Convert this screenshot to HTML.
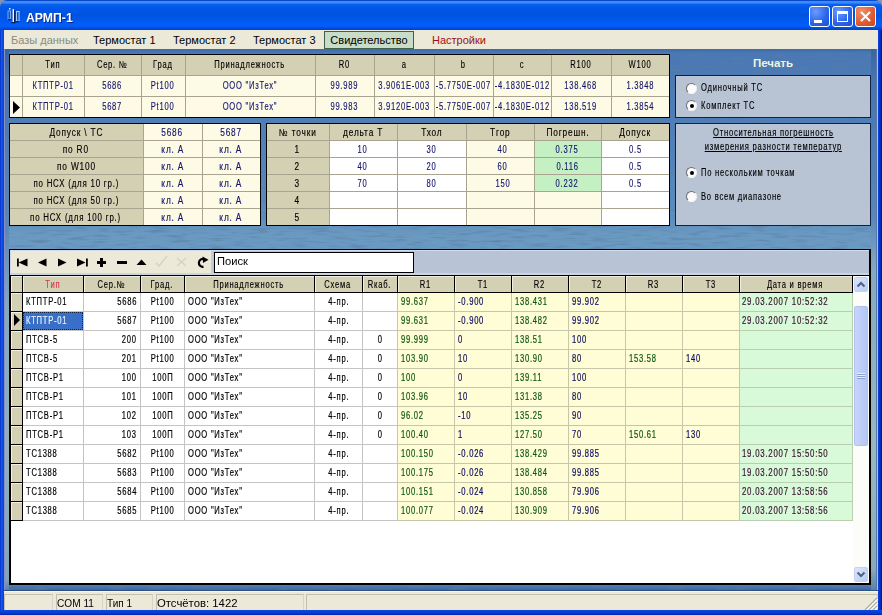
<!DOCTYPE html><html><head><meta charset="utf-8"><style>
html,body{margin:0;padding:0;width:882px;height:615px;overflow:hidden;background:#8a94a8;font-family:"Liberation Sans", sans-serif;font-size:11px;}
div{box-sizing:border-box;}
</style></head><body>
<div style="position:absolute;left:0px;top:0px;width:882px;height:30px;background:linear-gradient(#0a48c8 0,#0a48c8 1px,#3d90ff 1px,#3888f8 3px,#0a5ef0 4.5px,#0058e8 8px,#0053e0 15px,#005af2 22px,#0060fa 26px,#004ede 28px,#0040c8 30px);border-radius:7px 7px 0 0;"></div>
<div style="position:absolute;left:0px;top:30px;width:4px;height:585px;background:linear-gradient(90deg,#0a3cd0 0,#0a3cd0 1px,#1454f0 1px,#1454f0 2px,#0c4ae8 2px,#0c4ae8 3px,#0a44e0 3px);"></div>
<div style="position:absolute;left:878px;top:30px;width:4px;height:585px;background:linear-gradient(90deg,#0a40d8 0,#0a40d8 1px,#0634c8 1px,#0634c8 2px,#042cb8 2px,#042cb8 3px,#0020a0 3px);"></div>
<div style="position:absolute;left:0px;top:610px;width:882px;height:5px;background:linear-gradient(#0a48e0,#0a40d8 2px,#0634c0 4px,#0020a0);"></div>
<svg style="position:absolute;left:4px;top:4px" width="22" height="22" viewBox="0 0 22 22"><rect x="4" y="7" width="2.5" height="8" fill="none" stroke="#7aaaf0" stroke-width="1"/><rect x="4" y="15" width="3" height="1.2" fill="#102070"/><rect x="5" y="4" width="1.5" height="1.5" fill="#e8f4ff"/><rect x="8.6" y="5" width="1.4" height="13" fill="#f0f8ff"/><rect x="10" y="6.5" width="1.4" height="12" fill="#0a1a60"/><rect x="7.5" y="18" width="4" height="1.3" fill="#0a1a60"/><rect x="12.5" y="7.5" width="2.6" height="9.5" fill="none" stroke="#a8ccf8" stroke-width="1"/><rect x="12" y="17" width="3.5" height="1.2" fill="#102070"/></svg>
<div style="position:absolute;left:26px;top:8px;width:120px;height:20px;line-height:20px;display:flex;justify-content:flex-start;white-space:nowrap;color:#fff;font-size:12.5px;font-weight:bold;text-shadow:1px 1px 0 #0a2a90;"><span style="display:block;flex:none;transform:scaleX(0.98);transform-origin:0 50%;">АРМП-1</span></div>
<div style="position:absolute;left:809px;top:6px;width:21px;height:21px;border:1px solid #fff;border-radius:3px;background:radial-gradient(circle at 30% 25%,#6a9cff,#2a62e8 60%,#1a50d8);"><div style="position:absolute;left:4px;top:13px;width:8px;height:3px;background:#fff"></div></div>
<div style="position:absolute;left:832px;top:6px;width:21px;height:21px;border:1px solid #fff;border-radius:3px;background:radial-gradient(circle at 30% 25%,#6a9cff,#2a62e8 60%,#1a50d8);"><div style="position:absolute;left:4px;top:4px;width:11px;height:11px;border:1px solid #fff;border-top-width:3px"></div></div>
<div style="position:absolute;left:855px;top:6px;width:21px;height:21px;border:1px solid #fff;border-radius:3px;background:radial-gradient(circle at 30% 25%,#f09070,#e05a30 60%,#c84818);"><svg style="position:absolute;left:3px;top:3px" width="13" height="13"><path d="M2 2L11 11M11 2L2 11" stroke="#fff" stroke-width="2"/></svg></div>
<div style="position:absolute;left:4px;top:30px;width:874px;height:19px;background:#ece9d8;"></div>
<div style="position:absolute;left:11px;top:31px;width:120px;height:19px;line-height:19px;display:flex;justify-content:flex-start;white-space:nowrap;color:#8a8a80;font-size:11px;"><span style="display:block;flex:none;transform:scaleX(1.0);transform-origin:0 50%;">Базы данных</span></div>
<div style="position:absolute;left:93px;top:31px;width:120px;height:19px;line-height:19px;display:flex;justify-content:flex-start;white-space:nowrap;color:#000;font-size:11px;"><span style="display:block;flex:none;transform:scaleX(1.0);transform-origin:0 50%;">Термостат 1</span></div>
<div style="position:absolute;left:173px;top:31px;width:120px;height:19px;line-height:19px;display:flex;justify-content:flex-start;white-space:nowrap;color:#000;font-size:11px;"><span style="display:block;flex:none;transform:scaleX(1.0);transform-origin:0 50%;">Термостат 2</span></div>
<div style="position:absolute;left:253px;top:31px;width:120px;height:19px;line-height:19px;display:flex;justify-content:flex-start;white-space:nowrap;color:#000;font-size:11px;"><span style="display:block;flex:none;transform:scaleX(1.0);transform-origin:0 50%;">Термостат 3</span></div>
<div style="position:absolute;left:432px;top:31px;width:120px;height:19px;line-height:19px;display:flex;justify-content:flex-start;white-space:nowrap;color:#a01010;font-size:11px;"><span style="display:block;flex:none;transform:scaleX(1.0);transform-origin:0 50%;">Настройки</span></div>
<div style="position:absolute;left:324px;top:31px;width:90px;height:18px;background:#c8dcc8;border:1px solid #40604a;"></div>
<div style="position:absolute;left:324px;top:31px;width:90px;height:19px;line-height:19px;display:flex;justify-content:center;white-space:nowrap;color:#000;font-size:11px;"><span style="display:block;flex:none;transform:scaleX(1.0);transform-origin:50% 50%;">Свидетельство</span></div>
<div style="position:absolute;left:4px;top:49px;width:874px;height:542px;background:linear-gradient(180deg,#3e6aa8 0px,#4a78b5 4px,#4d7cb8 60px,#5686bc 130px,#5d8ebf 170px,#6a9ac2 185px,#6a9ac2 200px,#5b8cbf 240px,#4f80b8 536px,#3a609a 542px);"></div>
<svg style="position:absolute;left:9px;top:53px" width="862" height="537"><filter id="tx" x="0" y="0" width="100%" height="100%"><feTurbulence type="fractalNoise" baseFrequency="0.05 0.4" numOctaves="2" seed="3"/><feColorMatrix values="0 0 0 0 0.1  0 0 0 0 0.2  0 0 0 0 0.35  0 0 0 -1.6 0.85"/></filter><rect width="862" height="537" filter="url(#tx)"/></svg>
<div style="position:absolute;left:4px;top:49px;width:5px;height:542px;background:linear-gradient(90deg,#8890c0 0,#8890c0 1px,rgba(0,0,0,0) 1px),linear-gradient(180deg,#3a64a0 0,#4874b0 30px,#5a88b8 180px,#84a8c0 260px,#90b0bc 400px,#80a4bc 530px,#5a80a8 542px);"></div>
<div style="position:absolute;left:871px;top:49px;width:7px;height:541px;background:linear-gradient(90deg,rgba(0,0,0,0) 5px,#5878a0 5px,#5878a0 6px,#a8c4e0 6px),linear-gradient(180deg,#3a64a0 0,#4874b0 30px,#5a88b8 170px,#84a8c0 220px,#98b8c0 400px,#88a8bc 520px,#5a80a8 541px);"></div>
<div style="position:absolute;left:4px;top:590px;width:874px;height:1px;background:#30508a;"></div>
<div style="position:absolute;left:4px;top:591px;width:874px;height:19px;background:#ece9d8;border-top:1px solid #f8f6ee;"></div>
<div style="position:absolute;left:4px;top:594px;width:49px;height:16px;border-left:1px solid #c4c0b0;border-top:1px solid #c4c0b0;border-right:1px solid #d8d4c8;"></div>
<div style="position:absolute;left:5px;top:595px;width:49px;height:16px;line-height:16px;display:flex;justify-content:flex-start;white-space:nowrap;color:#000;font-size:11px;"><span style="display:block;flex:none;transform:scaleX(1);transform-origin:0 50%;"></span></div>
<div style="position:absolute;left:56px;top:594px;width:47px;height:16px;border-left:1px solid #c4c0b0;border-top:1px solid #c4c0b0;border-right:1px solid #d8d4c8;"></div>
<div style="position:absolute;left:57px;top:595px;width:47px;height:16px;line-height:16px;display:flex;justify-content:flex-start;white-space:nowrap;color:#000;font-size:11px;"><span style="display:block;flex:none;transform:scaleX(0.92);transform-origin:0 50%;">COM 11</span></div>
<div style="position:absolute;left:106px;top:594px;width:47px;height:16px;border-left:1px solid #c4c0b0;border-top:1px solid #c4c0b0;border-right:1px solid #d8d4c8;"></div>
<div style="position:absolute;left:107px;top:595px;width:47px;height:16px;line-height:16px;display:flex;justify-content:flex-start;white-space:nowrap;color:#000;font-size:11px;"><span style="display:block;flex:none;transform:scaleX(0.91);transform-origin:0 50%;">Тип 1</span></div>
<div style="position:absolute;left:156px;top:594px;width:148px;height:16px;border-left:1px solid #c4c0b0;border-top:1px solid #c4c0b0;border-right:1px solid #d8d4c8;"></div>
<div style="position:absolute;left:157px;top:595px;width:148px;height:16px;line-height:16px;display:flex;justify-content:flex-start;white-space:nowrap;color:#000;font-size:11px;"><span style="display:block;flex:none;transform:scaleX(1.03);transform-origin:0 50%;">Отсчётов: 1422</span></div>
<div style="position:absolute;left:306px;top:594px;width:572px;height:16px;border-left:1px solid #c4c0b0;border-top:1px solid #c4c0b0;border-right:1px solid #d8d4c8;"></div>
<div style="position:absolute;left:307px;top:595px;width:572px;height:16px;line-height:16px;display:flex;justify-content:flex-start;white-space:nowrap;color:#000;font-size:11px;"><span style="display:block;flex:none;transform:scaleX(1);transform-origin:0 50%;"></span></div>
<svg style="position:absolute;left:864px;top:597px" width="14" height="13"><g stroke-width="1.2"><path d="M13 1L1 13" stroke="#aca899"/><path d="M13 5L5 13" stroke="#aca899"/><path d="M13 9L9 13" stroke="#aca899"/><path d="M14 2L2 14" stroke="#fff"/><path d="M14 6L6 14" stroke="#fff"/><path d="M14 10L10 14" stroke="#fff"/></g></svg>
<div style="position:absolute;left:9px;top:54px;width:661px;height:64px;background:#a8a490;border:1px solid #000;"></div>
<div style="position:absolute;left:10px;top:55px;width:12px;height:20px;background:#d4d0b4;"></div>
<div style="position:absolute;left:23px;top:55px;width:61px;height:20px;background:#d4d0b4;"></div>
<div style="position:absolute;left:22px;top:55px;width:61px;height:20px;line-height:20px;display:flex;justify-content:center;white-space:nowrap;color:#000;font-size:10px;-webkit-text-stroke:0.15px #000;"><span style="display:block;flex:none;transform:scaleX(0.76);transform-origin:50% 50%;letter-spacing:1.0px;margin-right:-1.0px;">Тип</span></div>
<div style="position:absolute;left:85px;top:55px;width:56px;height:20px;background:#d4d0b4;"></div>
<div style="position:absolute;left:84px;top:55px;width:56px;height:20px;line-height:20px;display:flex;justify-content:center;white-space:nowrap;color:#000;font-size:10px;-webkit-text-stroke:0.15px #000;"><span style="display:block;flex:none;transform:scaleX(0.76);transform-origin:50% 50%;letter-spacing:1.0px;margin-right:-1.0px;">Сер. №</span></div>
<div style="position:absolute;left:142px;top:55px;width:43px;height:20px;background:#d4d0b4;"></div>
<div style="position:absolute;left:141px;top:55px;width:43px;height:20px;line-height:20px;display:flex;justify-content:center;white-space:nowrap;color:#000;font-size:10px;-webkit-text-stroke:0.15px #000;"><span style="display:block;flex:none;transform:scaleX(0.76);transform-origin:50% 50%;letter-spacing:1.0px;margin-right:-1.0px;">Град</span></div>
<div style="position:absolute;left:186px;top:55px;width:129px;height:20px;background:#d4d0b4;"></div>
<div style="position:absolute;left:185px;top:55px;width:129px;height:20px;line-height:20px;display:flex;justify-content:center;white-space:nowrap;color:#000;font-size:10px;-webkit-text-stroke:0.15px #000;"><span style="display:block;flex:none;transform:scaleX(0.76);transform-origin:50% 50%;letter-spacing:1.0px;margin-right:-1.0px;">Принадлежность</span></div>
<div style="position:absolute;left:316px;top:55px;width:58px;height:20px;background:#d4d0b4;"></div>
<div style="position:absolute;left:315px;top:55px;width:58px;height:20px;line-height:20px;display:flex;justify-content:center;white-space:nowrap;color:#000;font-size:10px;-webkit-text-stroke:0.15px #000;"><span style="display:block;flex:none;transform:scaleX(0.76);transform-origin:50% 50%;letter-spacing:1.0px;margin-right:-1.0px;">R0</span></div>
<div style="position:absolute;left:375px;top:55px;width:59px;height:20px;background:#d4d0b4;"></div>
<div style="position:absolute;left:374px;top:55px;width:59px;height:20px;line-height:20px;display:flex;justify-content:center;white-space:nowrap;color:#000;font-size:10px;-webkit-text-stroke:0.15px #000;"><span style="display:block;flex:none;transform:scaleX(0.76);transform-origin:50% 50%;letter-spacing:1.0px;margin-right:-1.0px;">a</span></div>
<div style="position:absolute;left:435px;top:55px;width:58px;height:20px;background:#d4d0b4;"></div>
<div style="position:absolute;left:434px;top:55px;width:58px;height:20px;line-height:20px;display:flex;justify-content:center;white-space:nowrap;color:#000;font-size:10px;-webkit-text-stroke:0.15px #000;"><span style="display:block;flex:none;transform:scaleX(0.76);transform-origin:50% 50%;letter-spacing:1.0px;margin-right:-1.0px;">b</span></div>
<div style="position:absolute;left:494px;top:55px;width:57px;height:20px;background:#d4d0b4;"></div>
<div style="position:absolute;left:493px;top:55px;width:57px;height:20px;line-height:20px;display:flex;justify-content:center;white-space:nowrap;color:#000;font-size:10px;-webkit-text-stroke:0.15px #000;"><span style="display:block;flex:none;transform:scaleX(0.76);transform-origin:50% 50%;letter-spacing:1.0px;margin-right:-1.0px;">c</span></div>
<div style="position:absolute;left:552px;top:55px;width:59px;height:20px;background:#d4d0b4;"></div>
<div style="position:absolute;left:551px;top:55px;width:59px;height:20px;line-height:20px;display:flex;justify-content:center;white-space:nowrap;color:#000;font-size:10px;-webkit-text-stroke:0.15px #000;"><span style="display:block;flex:none;transform:scaleX(0.76);transform-origin:50% 50%;letter-spacing:1.0px;margin-right:-1.0px;">R100</span></div>
<div style="position:absolute;left:612px;top:55px;width:57px;height:20px;background:#d4d0b4;"></div>
<div style="position:absolute;left:611px;top:55px;width:57px;height:20px;line-height:20px;display:flex;justify-content:center;white-space:nowrap;color:#000;font-size:10px;-webkit-text-stroke:0.15px #000;"><span style="display:block;flex:none;transform:scaleX(0.76);transform-origin:50% 50%;letter-spacing:1.0px;margin-right:-1.0px;">W100</span></div>
<div style="position:absolute;left:10px;top:76px;width:12px;height:20px;background:#fdfbe6;"></div>
<div style="position:absolute;left:23px;top:76px;width:61px;height:20px;background:#fdfbe6;"></div>
<div style="position:absolute;left:22px;top:76px;width:61px;height:20px;line-height:20px;display:flex;justify-content:center;white-space:nowrap;color:#14146e;font-size:10px;-webkit-text-stroke:0.15px #14146e;"><span style="display:block;flex:none;transform:scaleX(0.76);transform-origin:50% 50%;letter-spacing:1.0px;margin-right:-1.0px;">КТПТР-01</span></div>
<div style="position:absolute;left:85px;top:76px;width:56px;height:20px;background:#fdfbe6;"></div>
<div style="position:absolute;left:84px;top:76px;width:56px;height:20px;line-height:20px;display:flex;justify-content:center;white-space:nowrap;color:#14146e;font-size:10px;-webkit-text-stroke:0.15px #14146e;"><span style="display:block;flex:none;transform:scaleX(0.76);transform-origin:50% 50%;letter-spacing:1.0px;margin-right:-1.0px;">5686</span></div>
<div style="position:absolute;left:142px;top:76px;width:43px;height:20px;background:#fdfbe6;"></div>
<div style="position:absolute;left:141px;top:76px;width:43px;height:20px;line-height:20px;display:flex;justify-content:center;white-space:nowrap;color:#14146e;font-size:10px;-webkit-text-stroke:0.15px #14146e;"><span style="display:block;flex:none;transform:scaleX(0.76);transform-origin:50% 50%;letter-spacing:1.0px;margin-right:-1.0px;">Pt100</span></div>
<div style="position:absolute;left:186px;top:76px;width:129px;height:20px;background:#fdfbe6;"></div>
<div style="position:absolute;left:185px;top:76px;width:129px;height:20px;line-height:20px;display:flex;justify-content:center;white-space:nowrap;color:#14146e;font-size:10px;-webkit-text-stroke:0.15px #14146e;"><span style="display:block;flex:none;transform:scaleX(0.76);transform-origin:50% 50%;letter-spacing:1.0px;margin-right:-1.0px;">ООО "ИзТех"</span></div>
<div style="position:absolute;left:316px;top:76px;width:58px;height:20px;background:#fdfbe6;"></div>
<div style="position:absolute;left:315px;top:76px;width:58px;height:20px;line-height:20px;display:flex;justify-content:center;white-space:nowrap;color:#14146e;font-size:10px;-webkit-text-stroke:0.15px #14146e;"><span style="display:block;flex:none;transform:scaleX(0.76);transform-origin:50% 50%;letter-spacing:1.0px;margin-right:-1.0px;">99.989</span></div>
<div style="position:absolute;left:375px;top:76px;width:59px;height:20px;background:#fdfbe6;"></div>
<div style="position:absolute;left:374px;top:76px;width:59px;height:20px;line-height:20px;display:flex;justify-content:center;white-space:nowrap;color:#14146e;font-size:10px;-webkit-text-stroke:0.15px #14146e;"><span style="display:block;flex:none;transform:scaleX(0.76);transform-origin:50% 50%;letter-spacing:1.0px;margin-right:-1.0px;">3.9061E-003</span></div>
<div style="position:absolute;left:435px;top:76px;width:58px;height:20px;background:#fdfbe6;"></div>
<div style="position:absolute;left:434px;top:76px;width:58px;height:20px;line-height:20px;display:flex;justify-content:center;white-space:nowrap;color:#14146e;font-size:10px;-webkit-text-stroke:0.15px #14146e;"><span style="display:block;flex:none;transform:scaleX(0.76);transform-origin:50% 50%;letter-spacing:1.0px;margin-right:-1.0px;">-5.7750E-007</span></div>
<div style="position:absolute;left:494px;top:76px;width:57px;height:20px;background:#fdfbe6;"></div>
<div style="position:absolute;left:493px;top:76px;width:57px;height:20px;line-height:20px;display:flex;justify-content:center;white-space:nowrap;color:#14146e;font-size:10px;-webkit-text-stroke:0.15px #14146e;"><span style="display:block;flex:none;transform:scaleX(0.76);transform-origin:50% 50%;letter-spacing:1.0px;margin-right:-1.0px;">-4.1830E-012</span></div>
<div style="position:absolute;left:552px;top:76px;width:59px;height:20px;background:#fdfbe6;"></div>
<div style="position:absolute;left:551px;top:76px;width:59px;height:20px;line-height:20px;display:flex;justify-content:center;white-space:nowrap;color:#14146e;font-size:10px;-webkit-text-stroke:0.15px #14146e;"><span style="display:block;flex:none;transform:scaleX(0.76);transform-origin:50% 50%;letter-spacing:1.0px;margin-right:-1.0px;">138.468</span></div>
<div style="position:absolute;left:612px;top:76px;width:57px;height:20px;background:#fdfbe6;"></div>
<div style="position:absolute;left:611px;top:76px;width:57px;height:20px;line-height:20px;display:flex;justify-content:center;white-space:nowrap;color:#14146e;font-size:10px;-webkit-text-stroke:0.15px #14146e;"><span style="display:block;flex:none;transform:scaleX(0.76);transform-origin:50% 50%;letter-spacing:1.0px;margin-right:-1.0px;">1.3848</span></div>
<div style="position:absolute;left:10px;top:97px;width:12px;height:20px;background:#fdfbe6;"></div>
<div style="position:absolute;left:23px;top:97px;width:61px;height:20px;background:#fdfbe6;"></div>
<div style="position:absolute;left:22px;top:97px;width:61px;height:20px;line-height:20px;display:flex;justify-content:center;white-space:nowrap;color:#14146e;font-size:10px;-webkit-text-stroke:0.15px #14146e;"><span style="display:block;flex:none;transform:scaleX(0.76);transform-origin:50% 50%;letter-spacing:1.0px;margin-right:-1.0px;">КТПТР-01</span></div>
<div style="position:absolute;left:85px;top:97px;width:56px;height:20px;background:#fdfbe6;"></div>
<div style="position:absolute;left:84px;top:97px;width:56px;height:20px;line-height:20px;display:flex;justify-content:center;white-space:nowrap;color:#14146e;font-size:10px;-webkit-text-stroke:0.15px #14146e;"><span style="display:block;flex:none;transform:scaleX(0.76);transform-origin:50% 50%;letter-spacing:1.0px;margin-right:-1.0px;">5687</span></div>
<div style="position:absolute;left:142px;top:97px;width:43px;height:20px;background:#fdfbe6;"></div>
<div style="position:absolute;left:141px;top:97px;width:43px;height:20px;line-height:20px;display:flex;justify-content:center;white-space:nowrap;color:#14146e;font-size:10px;-webkit-text-stroke:0.15px #14146e;"><span style="display:block;flex:none;transform:scaleX(0.76);transform-origin:50% 50%;letter-spacing:1.0px;margin-right:-1.0px;">Pt100</span></div>
<div style="position:absolute;left:186px;top:97px;width:129px;height:20px;background:#fdfbe6;"></div>
<div style="position:absolute;left:185px;top:97px;width:129px;height:20px;line-height:20px;display:flex;justify-content:center;white-space:nowrap;color:#14146e;font-size:10px;-webkit-text-stroke:0.15px #14146e;"><span style="display:block;flex:none;transform:scaleX(0.76);transform-origin:50% 50%;letter-spacing:1.0px;margin-right:-1.0px;">ООО "ИзТех"</span></div>
<div style="position:absolute;left:316px;top:97px;width:58px;height:20px;background:#fdfbe6;"></div>
<div style="position:absolute;left:315px;top:97px;width:58px;height:20px;line-height:20px;display:flex;justify-content:center;white-space:nowrap;color:#14146e;font-size:10px;-webkit-text-stroke:0.15px #14146e;"><span style="display:block;flex:none;transform:scaleX(0.76);transform-origin:50% 50%;letter-spacing:1.0px;margin-right:-1.0px;">99.983</span></div>
<div style="position:absolute;left:375px;top:97px;width:59px;height:20px;background:#fdfbe6;"></div>
<div style="position:absolute;left:374px;top:97px;width:59px;height:20px;line-height:20px;display:flex;justify-content:center;white-space:nowrap;color:#14146e;font-size:10px;-webkit-text-stroke:0.15px #14146e;"><span style="display:block;flex:none;transform:scaleX(0.76);transform-origin:50% 50%;letter-spacing:1.0px;margin-right:-1.0px;">3.9120E-003</span></div>
<div style="position:absolute;left:435px;top:97px;width:58px;height:20px;background:#fdfbe6;"></div>
<div style="position:absolute;left:434px;top:97px;width:58px;height:20px;line-height:20px;display:flex;justify-content:center;white-space:nowrap;color:#14146e;font-size:10px;-webkit-text-stroke:0.15px #14146e;"><span style="display:block;flex:none;transform:scaleX(0.76);transform-origin:50% 50%;letter-spacing:1.0px;margin-right:-1.0px;">-5.7750E-007</span></div>
<div style="position:absolute;left:494px;top:97px;width:57px;height:20px;background:#fdfbe6;"></div>
<div style="position:absolute;left:493px;top:97px;width:57px;height:20px;line-height:20px;display:flex;justify-content:center;white-space:nowrap;color:#14146e;font-size:10px;-webkit-text-stroke:0.15px #14146e;"><span style="display:block;flex:none;transform:scaleX(0.76);transform-origin:50% 50%;letter-spacing:1.0px;margin-right:-1.0px;">-4.1830E-012</span></div>
<div style="position:absolute;left:552px;top:97px;width:59px;height:20px;background:#fdfbe6;"></div>
<div style="position:absolute;left:551px;top:97px;width:59px;height:20px;line-height:20px;display:flex;justify-content:center;white-space:nowrap;color:#14146e;font-size:10px;-webkit-text-stroke:0.15px #14146e;"><span style="display:block;flex:none;transform:scaleX(0.76);transform-origin:50% 50%;letter-spacing:1.0px;margin-right:-1.0px;">138.519</span></div>
<div style="position:absolute;left:612px;top:97px;width:57px;height:20px;background:#fdfbe6;"></div>
<div style="position:absolute;left:611px;top:97px;width:57px;height:20px;line-height:20px;display:flex;justify-content:center;white-space:nowrap;color:#14146e;font-size:10px;-webkit-text-stroke:0.15px #14146e;"><span style="display:block;flex:none;transform:scaleX(0.76);transform-origin:50% 50%;letter-spacing:1.0px;margin-right:-1.0px;">1.3854</span></div>
<svg style="position:absolute;left:12px;top:101px" width="9" height="13"><path d="M1 0L8 6.5L1 13Z" fill="#000"/></svg>
<div style="position:absolute;left:675px;top:53px;width:196px;height:20px;line-height:20px;display:flex;justify-content:center;white-space:nowrap;color:#eef4e0;font-size:11.5px;font-weight:bold;"><span style="display:block;flex:none;transform:scaleX(1.0);transform-origin:50% 50%;">Печать</span></div>
<div style="position:absolute;left:675px;top:75px;width:196px;height:43px;background:#b8c4d4;border:1px solid #102040;"></div>
<div style="position:absolute;left:686.0px;top:83.0px;width:11px;height:11px;border-radius:50%;background:#fcfcfc;border:1px solid;border-color:#6c6c6c #f0f0f0 #f8f8f8 #6c6c6c;transform:rotate(0deg);"></div>
<div style="position:absolute;left:701px;top:79px;width:160px;height:17px;line-height:17px;display:flex;justify-content:flex-start;white-space:nowrap;color:#000;font-size:10px;-webkit-text-stroke:0.15px #000;"><span style="display:block;flex:none;transform:scaleX(0.76);transform-origin:0 50%;letter-spacing:1.0px;">Одиночный ТС</span></div>
<div style="position:absolute;left:686.0px;top:100.0px;width:11px;height:11px;border-radius:50%;background:#fcfcfc;border:1px solid;border-color:#6c6c6c #f0f0f0 #f8f8f8 #6c6c6c;transform:rotate(0deg);"><div style="position:absolute;left:3px;top:3px;width:4px;height:4px;border-radius:50%;background:#000"></div></div>
<div style="position:absolute;left:701px;top:97px;width:160px;height:17px;line-height:17px;display:flex;justify-content:flex-start;white-space:nowrap;color:#000;font-size:10px;-webkit-text-stroke:0.15px #000;"><span style="display:block;flex:none;transform:scaleX(0.76);transform-origin:0 50%;letter-spacing:1.0px;">Комплект ТС</span></div>
<div style="position:absolute;left:9px;top:123px;width:252px;height:103px;background:#a8a490;border:1px solid #000;"></div>
<div style="position:absolute;left:10px;top:124px;width:133px;height:16px;background:#d4d0b4;"></div>
<div style="position:absolute;left:9px;top:125px;width:133px;height:16px;line-height:16px;display:flex;justify-content:center;white-space:nowrap;color:#000;font-size:10px;-webkit-text-stroke:0.15px #000;"><span style="display:block;flex:none;transform:scaleX(0.83);transform-origin:50% 50%;letter-spacing:1.0px;margin-right:-1.0px;">Допуск \ ТС</span></div>
<div style="position:absolute;left:144px;top:124px;width:58px;height:16px;background:#fdfbe6;"></div>
<div style="position:absolute;left:143px;top:125px;width:58px;height:16px;line-height:16px;display:flex;justify-content:center;white-space:nowrap;color:#14146e;font-size:10px;-webkit-text-stroke:0.15px #14146e;"><span style="display:block;flex:none;transform:scaleX(0.83);transform-origin:50% 50%;letter-spacing:1.0px;margin-right:-1.0px;">5686</span></div>
<div style="position:absolute;left:203px;top:124px;width:57px;height:16px;background:#fdfbe6;"></div>
<div style="position:absolute;left:202px;top:125px;width:57px;height:16px;line-height:16px;display:flex;justify-content:center;white-space:nowrap;color:#14146e;font-size:10px;-webkit-text-stroke:0.15px #14146e;"><span style="display:block;flex:none;transform:scaleX(0.83);transform-origin:50% 50%;letter-spacing:1.0px;margin-right:-1.0px;">5687</span></div>
<div style="position:absolute;left:10px;top:141px;width:133px;height:16px;background:#d4d0b4;"></div>
<div style="position:absolute;left:9px;top:142px;width:133px;height:16px;line-height:16px;display:flex;justify-content:center;white-space:nowrap;color:#000;font-size:10px;-webkit-text-stroke:0.15px #000;"><span style="display:block;flex:none;transform:scaleX(0.83);transform-origin:50% 50%;letter-spacing:1.0px;margin-right:-1.0px;">по R0</span></div>
<div style="position:absolute;left:144px;top:141px;width:58px;height:16px;background:#fdfbe6;"></div>
<div style="position:absolute;left:143px;top:142px;width:58px;height:16px;line-height:16px;display:flex;justify-content:center;white-space:nowrap;color:#14146e;font-size:10px;-webkit-text-stroke:0.15px #14146e;"><span style="display:block;flex:none;transform:scaleX(0.83);transform-origin:50% 50%;letter-spacing:1.0px;margin-right:-1.0px;">кл. А</span></div>
<div style="position:absolute;left:203px;top:141px;width:57px;height:16px;background:#fdfbe6;"></div>
<div style="position:absolute;left:202px;top:142px;width:57px;height:16px;line-height:16px;display:flex;justify-content:center;white-space:nowrap;color:#14146e;font-size:10px;-webkit-text-stroke:0.15px #14146e;"><span style="display:block;flex:none;transform:scaleX(0.83);transform-origin:50% 50%;letter-spacing:1.0px;margin-right:-1.0px;">кл. А</span></div>
<div style="position:absolute;left:10px;top:158px;width:133px;height:16px;background:#d4d0b4;"></div>
<div style="position:absolute;left:9px;top:159px;width:133px;height:16px;line-height:16px;display:flex;justify-content:center;white-space:nowrap;color:#000;font-size:10px;-webkit-text-stroke:0.15px #000;"><span style="display:block;flex:none;transform:scaleX(0.83);transform-origin:50% 50%;letter-spacing:1.0px;margin-right:-1.0px;">по W100</span></div>
<div style="position:absolute;left:144px;top:158px;width:58px;height:16px;background:#fdfbe6;"></div>
<div style="position:absolute;left:143px;top:159px;width:58px;height:16px;line-height:16px;display:flex;justify-content:center;white-space:nowrap;color:#14146e;font-size:10px;-webkit-text-stroke:0.15px #14146e;"><span style="display:block;flex:none;transform:scaleX(0.83);transform-origin:50% 50%;letter-spacing:1.0px;margin-right:-1.0px;">кл. А</span></div>
<div style="position:absolute;left:203px;top:158px;width:57px;height:16px;background:#fdfbe6;"></div>
<div style="position:absolute;left:202px;top:159px;width:57px;height:16px;line-height:16px;display:flex;justify-content:center;white-space:nowrap;color:#14146e;font-size:10px;-webkit-text-stroke:0.15px #14146e;"><span style="display:block;flex:none;transform:scaleX(0.83);transform-origin:50% 50%;letter-spacing:1.0px;margin-right:-1.0px;">кл. А</span></div>
<div style="position:absolute;left:10px;top:175px;width:133px;height:16px;background:#d4d0b4;"></div>
<div style="position:absolute;left:9px;top:176px;width:133px;height:16px;line-height:16px;display:flex;justify-content:center;white-space:nowrap;color:#000;font-size:10px;-webkit-text-stroke:0.15px #000;"><span style="display:block;flex:none;transform:scaleX(0.79);transform-origin:50% 50%;letter-spacing:1.0px;margin-right:-1.0px;">по НСХ (для 10 гр.)</span></div>
<div style="position:absolute;left:144px;top:175px;width:58px;height:16px;background:#fdfbe6;"></div>
<div style="position:absolute;left:143px;top:176px;width:58px;height:16px;line-height:16px;display:flex;justify-content:center;white-space:nowrap;color:#14146e;font-size:10px;-webkit-text-stroke:0.15px #14146e;"><span style="display:block;flex:none;transform:scaleX(0.83);transform-origin:50% 50%;letter-spacing:1.0px;margin-right:-1.0px;">кл. А</span></div>
<div style="position:absolute;left:203px;top:175px;width:57px;height:16px;background:#fdfbe6;"></div>
<div style="position:absolute;left:202px;top:176px;width:57px;height:16px;line-height:16px;display:flex;justify-content:center;white-space:nowrap;color:#14146e;font-size:10px;-webkit-text-stroke:0.15px #14146e;"><span style="display:block;flex:none;transform:scaleX(0.83);transform-origin:50% 50%;letter-spacing:1.0px;margin-right:-1.0px;">кл. А</span></div>
<div style="position:absolute;left:10px;top:192px;width:133px;height:16px;background:#d4d0b4;"></div>
<div style="position:absolute;left:9px;top:193px;width:133px;height:16px;line-height:16px;display:flex;justify-content:center;white-space:nowrap;color:#000;font-size:10px;-webkit-text-stroke:0.15px #000;"><span style="display:block;flex:none;transform:scaleX(0.79);transform-origin:50% 50%;letter-spacing:1.0px;margin-right:-1.0px;">по НСХ (для 50 гр.)</span></div>
<div style="position:absolute;left:144px;top:192px;width:58px;height:16px;background:#fdfbe6;"></div>
<div style="position:absolute;left:143px;top:193px;width:58px;height:16px;line-height:16px;display:flex;justify-content:center;white-space:nowrap;color:#14146e;font-size:10px;-webkit-text-stroke:0.15px #14146e;"><span style="display:block;flex:none;transform:scaleX(0.83);transform-origin:50% 50%;letter-spacing:1.0px;margin-right:-1.0px;">кл. А</span></div>
<div style="position:absolute;left:203px;top:192px;width:57px;height:16px;background:#fdfbe6;"></div>
<div style="position:absolute;left:202px;top:193px;width:57px;height:16px;line-height:16px;display:flex;justify-content:center;white-space:nowrap;color:#14146e;font-size:10px;-webkit-text-stroke:0.15px #14146e;"><span style="display:block;flex:none;transform:scaleX(0.83);transform-origin:50% 50%;letter-spacing:1.0px;margin-right:-1.0px;">кл. А</span></div>
<div style="position:absolute;left:10px;top:209px;width:133px;height:16px;background:#d4d0b4;"></div>
<div style="position:absolute;left:9px;top:210px;width:133px;height:16px;line-height:16px;display:flex;justify-content:center;white-space:nowrap;color:#000;font-size:10px;-webkit-text-stroke:0.15px #000;"><span style="display:block;flex:none;transform:scaleX(0.79);transform-origin:50% 50%;letter-spacing:1.0px;margin-right:-1.0px;">по НСХ (для 100 гр.)</span></div>
<div style="position:absolute;left:144px;top:209px;width:58px;height:16px;background:#fdfbe6;"></div>
<div style="position:absolute;left:143px;top:210px;width:58px;height:16px;line-height:16px;display:flex;justify-content:center;white-space:nowrap;color:#14146e;font-size:10px;-webkit-text-stroke:0.15px #14146e;"><span style="display:block;flex:none;transform:scaleX(0.83);transform-origin:50% 50%;letter-spacing:1.0px;margin-right:-1.0px;">кл. А</span></div>
<div style="position:absolute;left:203px;top:209px;width:57px;height:16px;background:#fdfbe6;"></div>
<div style="position:absolute;left:202px;top:210px;width:57px;height:16px;line-height:16px;display:flex;justify-content:center;white-space:nowrap;color:#14146e;font-size:10px;-webkit-text-stroke:0.15px #14146e;"><span style="display:block;flex:none;transform:scaleX(0.83);transform-origin:50% 50%;letter-spacing:1.0px;margin-right:-1.0px;">кл. А</span></div>
<div style="position:absolute;left:266px;top:123px;width:404px;height:103px;background:#a8a490;border:1px solid #000;"></div>
<div style="position:absolute;left:267px;top:124px;width:62px;height:16px;background:#d4d0b4;"></div>
<div style="position:absolute;left:266px;top:125px;width:62px;height:16px;line-height:16px;display:flex;justify-content:center;white-space:nowrap;color:#000;font-size:10px;-webkit-text-stroke:0.15px #000;"><span style="display:block;flex:none;transform:scaleX(0.83);transform-origin:50% 50%;letter-spacing:1.0px;margin-right:-1.0px;">№ точки</span></div>
<div style="position:absolute;left:330px;top:124px;width:67px;height:16px;background:#d4d0b4;"></div>
<div style="position:absolute;left:329px;top:125px;width:67px;height:16px;line-height:16px;display:flex;justify-content:center;white-space:nowrap;color:#000;font-size:10px;-webkit-text-stroke:0.15px #000;"><span style="display:block;flex:none;transform:scaleX(0.83);transform-origin:50% 50%;letter-spacing:1.0px;margin-right:-1.0px;">дельта T</span></div>
<div style="position:absolute;left:398px;top:124px;width:68px;height:16px;background:#d4d0b4;"></div>
<div style="position:absolute;left:397px;top:125px;width:68px;height:16px;line-height:16px;display:flex;justify-content:center;white-space:nowrap;color:#000;font-size:10px;-webkit-text-stroke:0.15px #000;"><span style="display:block;flex:none;transform:scaleX(0.83);transform-origin:50% 50%;letter-spacing:1.0px;margin-right:-1.0px;">Тхол</span></div>
<div style="position:absolute;left:467px;top:124px;width:67px;height:16px;background:#d4d0b4;"></div>
<div style="position:absolute;left:466px;top:125px;width:67px;height:16px;line-height:16px;display:flex;justify-content:center;white-space:nowrap;color:#000;font-size:10px;-webkit-text-stroke:0.15px #000;"><span style="display:block;flex:none;transform:scaleX(0.83);transform-origin:50% 50%;letter-spacing:1.0px;margin-right:-1.0px;">Tгор</span></div>
<div style="position:absolute;left:535px;top:124px;width:66px;height:16px;background:#d4d0b4;"></div>
<div style="position:absolute;left:534px;top:125px;width:66px;height:16px;line-height:16px;display:flex;justify-content:center;white-space:nowrap;color:#000;font-size:10px;-webkit-text-stroke:0.15px #000;"><span style="display:block;flex:none;transform:scaleX(0.83);transform-origin:50% 50%;letter-spacing:1.0px;margin-right:-1.0px;">Погрешн.</span></div>
<div style="position:absolute;left:602px;top:124px;width:67px;height:16px;background:#d4d0b4;"></div>
<div style="position:absolute;left:601px;top:125px;width:67px;height:16px;line-height:16px;display:flex;justify-content:center;white-space:nowrap;color:#000;font-size:10px;-webkit-text-stroke:0.15px #000;"><span style="display:block;flex:none;transform:scaleX(0.83);transform-origin:50% 50%;letter-spacing:1.0px;margin-right:-1.0px;">Допуск</span></div>
<div style="position:absolute;left:267px;top:141px;width:62px;height:16px;background:#d4d0b4;"></div>
<div style="position:absolute;left:266px;top:142px;width:62px;height:16px;line-height:16px;display:flex;justify-content:center;white-space:nowrap;color:#000;font-size:10px;-webkit-text-stroke:0.15px #000;"><span style="display:block;flex:none;transform:scaleX(0.83);transform-origin:50% 50%;letter-spacing:1.0px;margin-right:-1.0px;">1</span></div>
<div style="position:absolute;left:330px;top:141px;width:67px;height:16px;background:#ffffff;"></div>
<div style="position:absolute;left:329px;top:142px;width:67px;height:16px;line-height:16px;display:flex;justify-content:center;white-space:nowrap;color:#14146e;font-size:10px;-webkit-text-stroke:0.15px #14146e;"><span style="display:block;flex:none;transform:scaleX(0.76);transform-origin:50% 50%;letter-spacing:1.0px;margin-right:-1.0px;">10</span></div>
<div style="position:absolute;left:398px;top:141px;width:68px;height:16px;background:#ffffff;"></div>
<div style="position:absolute;left:397px;top:142px;width:68px;height:16px;line-height:16px;display:flex;justify-content:center;white-space:nowrap;color:#14146e;font-size:10px;-webkit-text-stroke:0.15px #14146e;"><span style="display:block;flex:none;transform:scaleX(0.76);transform-origin:50% 50%;letter-spacing:1.0px;margin-right:-1.0px;">30</span></div>
<div style="position:absolute;left:467px;top:141px;width:67px;height:16px;background:#fdfbe6;"></div>
<div style="position:absolute;left:466px;top:142px;width:67px;height:16px;line-height:16px;display:flex;justify-content:center;white-space:nowrap;color:#14146e;font-size:10px;-webkit-text-stroke:0.15px #14146e;"><span style="display:block;flex:none;transform:scaleX(0.76);transform-origin:50% 50%;letter-spacing:1.0px;margin-right:-1.0px;"><span style="position:relative;left:4px">40</span></span></div>
<div style="position:absolute;left:535px;top:141px;width:66px;height:16px;background:#c4f0c4;"></div>
<div style="position:absolute;left:534px;top:142px;width:66px;height:16px;line-height:16px;display:flex;justify-content:center;white-space:nowrap;color:#14146e;font-size:10px;-webkit-text-stroke:0.15px #14146e;"><span style="display:block;flex:none;transform:scaleX(0.76);transform-origin:50% 50%;letter-spacing:1.0px;margin-right:-1.0px;">0.375</span></div>
<div style="position:absolute;left:602px;top:141px;width:67px;height:16px;background:#ffffff;"></div>
<div style="position:absolute;left:601px;top:142px;width:67px;height:16px;line-height:16px;display:flex;justify-content:center;white-space:nowrap;color:#14146e;font-size:10px;-webkit-text-stroke:0.15px #14146e;"><span style="display:block;flex:none;transform:scaleX(0.76);transform-origin:50% 50%;letter-spacing:1.0px;margin-right:-1.0px;">0.5</span></div>
<div style="position:absolute;left:267px;top:158px;width:62px;height:16px;background:#d4d0b4;"></div>
<div style="position:absolute;left:266px;top:159px;width:62px;height:16px;line-height:16px;display:flex;justify-content:center;white-space:nowrap;color:#000;font-size:10px;-webkit-text-stroke:0.15px #000;"><span style="display:block;flex:none;transform:scaleX(0.83);transform-origin:50% 50%;letter-spacing:1.0px;margin-right:-1.0px;">2</span></div>
<div style="position:absolute;left:330px;top:158px;width:67px;height:16px;background:#ffffff;"></div>
<div style="position:absolute;left:329px;top:159px;width:67px;height:16px;line-height:16px;display:flex;justify-content:center;white-space:nowrap;color:#14146e;font-size:10px;-webkit-text-stroke:0.15px #14146e;"><span style="display:block;flex:none;transform:scaleX(0.76);transform-origin:50% 50%;letter-spacing:1.0px;margin-right:-1.0px;">40</span></div>
<div style="position:absolute;left:398px;top:158px;width:68px;height:16px;background:#ffffff;"></div>
<div style="position:absolute;left:397px;top:159px;width:68px;height:16px;line-height:16px;display:flex;justify-content:center;white-space:nowrap;color:#14146e;font-size:10px;-webkit-text-stroke:0.15px #14146e;"><span style="display:block;flex:none;transform:scaleX(0.76);transform-origin:50% 50%;letter-spacing:1.0px;margin-right:-1.0px;">20</span></div>
<div style="position:absolute;left:467px;top:158px;width:67px;height:16px;background:#fdfbe6;"></div>
<div style="position:absolute;left:466px;top:159px;width:67px;height:16px;line-height:16px;display:flex;justify-content:center;white-space:nowrap;color:#14146e;font-size:10px;-webkit-text-stroke:0.15px #14146e;"><span style="display:block;flex:none;transform:scaleX(0.76);transform-origin:50% 50%;letter-spacing:1.0px;margin-right:-1.0px;"><span style="position:relative;left:4px">60</span></span></div>
<div style="position:absolute;left:535px;top:158px;width:66px;height:16px;background:#c4f0c4;"></div>
<div style="position:absolute;left:534px;top:159px;width:66px;height:16px;line-height:16px;display:flex;justify-content:center;white-space:nowrap;color:#14146e;font-size:10px;-webkit-text-stroke:0.15px #14146e;"><span style="display:block;flex:none;transform:scaleX(0.76);transform-origin:50% 50%;letter-spacing:1.0px;margin-right:-1.0px;">0.116</span></div>
<div style="position:absolute;left:602px;top:158px;width:67px;height:16px;background:#ffffff;"></div>
<div style="position:absolute;left:601px;top:159px;width:67px;height:16px;line-height:16px;display:flex;justify-content:center;white-space:nowrap;color:#14146e;font-size:10px;-webkit-text-stroke:0.15px #14146e;"><span style="display:block;flex:none;transform:scaleX(0.76);transform-origin:50% 50%;letter-spacing:1.0px;margin-right:-1.0px;">0.5</span></div>
<div style="position:absolute;left:267px;top:175px;width:62px;height:16px;background:#d4d0b4;"></div>
<div style="position:absolute;left:266px;top:176px;width:62px;height:16px;line-height:16px;display:flex;justify-content:center;white-space:nowrap;color:#000;font-size:10px;-webkit-text-stroke:0.15px #000;"><span style="display:block;flex:none;transform:scaleX(0.83);transform-origin:50% 50%;letter-spacing:1.0px;margin-right:-1.0px;">3</span></div>
<div style="position:absolute;left:330px;top:175px;width:67px;height:16px;background:#ffffff;"></div>
<div style="position:absolute;left:329px;top:176px;width:67px;height:16px;line-height:16px;display:flex;justify-content:center;white-space:nowrap;color:#14146e;font-size:10px;-webkit-text-stroke:0.15px #14146e;"><span style="display:block;flex:none;transform:scaleX(0.76);transform-origin:50% 50%;letter-spacing:1.0px;margin-right:-1.0px;">70</span></div>
<div style="position:absolute;left:398px;top:175px;width:68px;height:16px;background:#ffffff;"></div>
<div style="position:absolute;left:397px;top:176px;width:68px;height:16px;line-height:16px;display:flex;justify-content:center;white-space:nowrap;color:#14146e;font-size:10px;-webkit-text-stroke:0.15px #14146e;"><span style="display:block;flex:none;transform:scaleX(0.76);transform-origin:50% 50%;letter-spacing:1.0px;margin-right:-1.0px;">80</span></div>
<div style="position:absolute;left:467px;top:175px;width:67px;height:16px;background:#fdfbe6;"></div>
<div style="position:absolute;left:466px;top:176px;width:67px;height:16px;line-height:16px;display:flex;justify-content:center;white-space:nowrap;color:#14146e;font-size:10px;-webkit-text-stroke:0.15px #14146e;"><span style="display:block;flex:none;transform:scaleX(0.76);transform-origin:50% 50%;letter-spacing:1.0px;margin-right:-1.0px;"><span style="position:relative;left:4px">150</span></span></div>
<div style="position:absolute;left:535px;top:175px;width:66px;height:16px;background:#c4f0c4;"></div>
<div style="position:absolute;left:534px;top:176px;width:66px;height:16px;line-height:16px;display:flex;justify-content:center;white-space:nowrap;color:#14146e;font-size:10px;-webkit-text-stroke:0.15px #14146e;"><span style="display:block;flex:none;transform:scaleX(0.76);transform-origin:50% 50%;letter-spacing:1.0px;margin-right:-1.0px;">0.232</span></div>
<div style="position:absolute;left:602px;top:175px;width:67px;height:16px;background:#ffffff;"></div>
<div style="position:absolute;left:601px;top:176px;width:67px;height:16px;line-height:16px;display:flex;justify-content:center;white-space:nowrap;color:#14146e;font-size:10px;-webkit-text-stroke:0.15px #14146e;"><span style="display:block;flex:none;transform:scaleX(0.76);transform-origin:50% 50%;letter-spacing:1.0px;margin-right:-1.0px;">0.5</span></div>
<div style="position:absolute;left:267px;top:192px;width:62px;height:16px;background:#d4d0b4;"></div>
<div style="position:absolute;left:266px;top:193px;width:62px;height:16px;line-height:16px;display:flex;justify-content:center;white-space:nowrap;color:#000;font-size:10px;-webkit-text-stroke:0.15px #000;"><span style="display:block;flex:none;transform:scaleX(0.83);transform-origin:50% 50%;letter-spacing:1.0px;margin-right:-1.0px;">4</span></div>
<div style="position:absolute;left:330px;top:192px;width:67px;height:16px;background:#ffffff;"></div>
<div style="position:absolute;left:398px;top:192px;width:68px;height:16px;background:#ffffff;"></div>
<div style="position:absolute;left:467px;top:192px;width:67px;height:16px;background:#fdfbe6;"></div>
<div style="position:absolute;left:535px;top:192px;width:66px;height:16px;background:#fdfbe6;"></div>
<div style="position:absolute;left:602px;top:192px;width:67px;height:16px;background:#ffffff;"></div>
<div style="position:absolute;left:267px;top:209px;width:62px;height:16px;background:#d4d0b4;"></div>
<div style="position:absolute;left:266px;top:210px;width:62px;height:16px;line-height:16px;display:flex;justify-content:center;white-space:nowrap;color:#000;font-size:10px;-webkit-text-stroke:0.15px #000;"><span style="display:block;flex:none;transform:scaleX(0.83);transform-origin:50% 50%;letter-spacing:1.0px;margin-right:-1.0px;">5</span></div>
<div style="position:absolute;left:330px;top:209px;width:67px;height:16px;background:#ffffff;"></div>
<div style="position:absolute;left:398px;top:209px;width:68px;height:16px;background:#ffffff;"></div>
<div style="position:absolute;left:467px;top:209px;width:67px;height:16px;background:#fdfbe6;"></div>
<div style="position:absolute;left:535px;top:209px;width:66px;height:16px;background:#fdfbe6;"></div>
<div style="position:absolute;left:602px;top:209px;width:67px;height:16px;background:#ffffff;"></div>
<div style="position:absolute;left:675px;top:123px;width:196px;height:103px;background:#b8c4d4;border:1px solid #102040;"></div>
<div style="position:absolute;left:675px;top:126px;width:196px;height:14px;line-height:14px;display:flex;justify-content:center;white-space:nowrap;color:#000;font-size:10px;-webkit-text-stroke:0.15px #000;"><span style="display:block;flex:none;transform:scaleX(0.76);transform-origin:50% 50%;letter-spacing:1.0px;margin-right:-1.0px;"><u>Относительная погрешность</u></span></div>
<div style="position:absolute;left:675px;top:140px;width:196px;height:14px;line-height:14px;display:flex;justify-content:center;white-space:nowrap;color:#000;font-size:10px;-webkit-text-stroke:0.15px #000;"><span style="display:block;flex:none;transform:scaleX(0.76);transform-origin:50% 50%;letter-spacing:1.0px;margin-right:-1.0px;"><u>измерения разности температур</u></span></div>
<div style="position:absolute;left:686.0px;top:166.5px;width:11px;height:11px;border-radius:50%;background:#fcfcfc;border:1px solid;border-color:#6c6c6c #f0f0f0 #f8f8f8 #6c6c6c;transform:rotate(0deg);"><div style="position:absolute;left:3px;top:3px;width:4px;height:4px;border-radius:50%;background:#000"></div></div>
<div style="position:absolute;left:701px;top:164px;width:160px;height:17px;line-height:17px;display:flex;justify-content:flex-start;white-space:nowrap;color:#000;font-size:10px;-webkit-text-stroke:0.15px #000;"><span style="display:block;flex:none;transform:scaleX(0.76);transform-origin:0 50%;letter-spacing:1.0px;">По нескольким точкам</span></div>
<div style="position:absolute;left:686.0px;top:190.5px;width:11px;height:11px;border-radius:50%;background:#fcfcfc;border:1px solid;border-color:#6c6c6c #f0f0f0 #f8f8f8 #6c6c6c;transform:rotate(0deg);"></div>
<div style="position:absolute;left:701px;top:188px;width:160px;height:17px;line-height:17px;display:flex;justify-content:flex-start;white-space:nowrap;color:#000;font-size:10px;-webkit-text-stroke:0.15px #000;"><span style="display:block;flex:none;transform:scaleX(0.76);transform-origin:0 50%;letter-spacing:1.0px;">Во всем диапазоне</span></div>
<div style="position:absolute;left:9px;top:249px;width:862px;height:336px;background:#fff;border-left:2px solid #000;border-right:2px solid #000;border-top:1px solid #000;border-bottom:2px solid #000;"></div>
<div style="position:absolute;left:10px;top:250px;width:859px;height:25px;background:#b8c4d6;"></div>
<div style="position:absolute;left:10px;top:250px;width:859px;height:1px;background:#d4dcea;"></div>
<div style="position:absolute;left:10px;top:251px;width:201px;height:22px;background:#ece9d8;border-left:1px solid #d0d8e4;"></div>
<div style="position:absolute;left:211px;top:251px;width:2px;height:22px;background:#c4ccd8;"></div>
<div style="position:absolute;left:10px;top:273px;width:859px;height:2px;background:#ccd4e0;"></div>
<svg style="position:absolute;left:11px;top:250px" width="202" height="24" viewBox="0 0 202 24"><g fill="#000"><rect x="6" y="8.5" width="1.8" height="8"/><path d="M7.5 12.5L16.5 8.5V16.5Z"/><path d="M27 12.5L35.5 8.5V16.5Z"/><path d="M47 8.5L55.5 12.5L47 16.5Z"/><path d="M66 8.5L74.5 12.5L66 16.5Z"/><rect x="75" y="8.5" width="1.8" height="8"/><rect x="86" y="11" width="9" height="3"/><rect x="89" y="8" width="3" height="9"/><rect x="106" y="11" width="10" height="3"/><path d="M125.5 15L130.5 9.5L135.5 15Z"/></g><path d="M145 13L148 16L156 6" stroke="#d4d0c4" stroke-width="1.3" fill="none"/><path d="M166 8L175 16M175 8L166 16" stroke="#d4d0c4" stroke-width="1.1" fill="none"/><path d="M192.5 16.8A4 4 0 1 1 193.5 9.2" stroke="#000" stroke-width="2.2" fill="none"/><path d="M191.5 6.5L197.5 9.8L192 13Z" fill="#000"/></svg>
<div style="position:absolute;left:214px;top:252px;width:200px;height:21px;background:#fff;border:1px solid #000;border-bottom-width:1px;"></div>
<div style="position:absolute;left:217px;top:252px;width:120px;height:19px;line-height:19px;display:flex;justify-content:flex-start;white-space:nowrap;color:#000;font-size:11.5px;"><span style="display:block;flex:none;transform:scaleX(0.97);transform-origin:0 50%;">Поиск</span></div>
<div style="position:absolute;left:11px;top:275px;width:858px;height:1px;background:#000;"></div>
<div style="position:absolute;left:11px;top:292px;width:842px;height:1px;background:#000;"></div>
<div style="position:absolute;left:11px;top:276px;width:11px;height:16px;background:#d4d0b4;border-left:1px solid #f4f2e8;border-top:1px solid #f4f2e8;"></div>
<div style="position:absolute;left:22px;top:276px;width:1px;height:16px;background:#000;"></div>
<div style="position:absolute;left:23px;top:276px;width:60px;height:16px;background:#d4d0b4;border-left:1px solid #f0eee0;border-top:1px solid #f0eee0;"></div>
<div style="position:absolute;left:22px;top:277px;width:60px;height:16px;line-height:16px;display:flex;justify-content:center;white-space:nowrap;color:#d83848;font-size:10px;-webkit-text-stroke:0.15px #d83848;"><span style="display:block;flex:none;transform:scaleX(0.76);transform-origin:50% 50%;letter-spacing:1.0px;margin-right:-1.0px;">Тип</span></div>
<div style="position:absolute;left:83px;top:276px;width:1px;height:16px;background:#000;"></div>
<div style="position:absolute;left:84px;top:276px;width:56px;height:16px;background:#d4d0b4;border-left:1px solid #f0eee0;border-top:1px solid #f0eee0;"></div>
<div style="position:absolute;left:83px;top:277px;width:56px;height:16px;line-height:16px;display:flex;justify-content:center;white-space:nowrap;color:#000;font-size:10px;-webkit-text-stroke:0.15px #000;"><span style="display:block;flex:none;transform:scaleX(0.76);transform-origin:50% 50%;letter-spacing:1.0px;margin-right:-1.0px;">Сер.№</span></div>
<div style="position:absolute;left:140px;top:276px;width:1px;height:16px;background:#000;"></div>
<div style="position:absolute;left:141px;top:276px;width:43px;height:16px;background:#d4d0b4;border-left:1px solid #f0eee0;border-top:1px solid #f0eee0;"></div>
<div style="position:absolute;left:140px;top:277px;width:43px;height:16px;line-height:16px;display:flex;justify-content:center;white-space:nowrap;color:#000;font-size:10px;-webkit-text-stroke:0.15px #000;"><span style="display:block;flex:none;transform:scaleX(0.76);transform-origin:50% 50%;letter-spacing:1.0px;margin-right:-1.0px;">Град.</span></div>
<div style="position:absolute;left:184px;top:276px;width:1px;height:16px;background:#000;"></div>
<div style="position:absolute;left:185px;top:276px;width:129px;height:16px;background:#d4d0b4;border-left:1px solid #f0eee0;border-top:1px solid #f0eee0;"></div>
<div style="position:absolute;left:184px;top:277px;width:129px;height:16px;line-height:16px;display:flex;justify-content:center;white-space:nowrap;color:#000;font-size:10px;-webkit-text-stroke:0.15px #000;"><span style="display:block;flex:none;transform:scaleX(0.76);transform-origin:50% 50%;letter-spacing:1.0px;margin-right:-1.0px;">Принадлежность</span></div>
<div style="position:absolute;left:314px;top:276px;width:1px;height:16px;background:#000;"></div>
<div style="position:absolute;left:315px;top:276px;width:47px;height:16px;background:#d4d0b4;border-left:1px solid #f0eee0;border-top:1px solid #f0eee0;"></div>
<div style="position:absolute;left:314px;top:277px;width:47px;height:16px;line-height:16px;display:flex;justify-content:center;white-space:nowrap;color:#000;font-size:10px;-webkit-text-stroke:0.15px #000;"><span style="display:block;flex:none;transform:scaleX(0.76);transform-origin:50% 50%;letter-spacing:1.0px;margin-right:-1.0px;">Схема</span></div>
<div style="position:absolute;left:362px;top:276px;width:1px;height:16px;background:#000;"></div>
<div style="position:absolute;left:363px;top:276px;width:34px;height:16px;background:#d4d0b4;border-left:1px solid #f0eee0;border-top:1px solid #f0eee0;"></div>
<div style="position:absolute;left:362px;top:277px;width:34px;height:16px;line-height:16px;display:flex;justify-content:center;white-space:nowrap;color:#000;font-size:10px;-webkit-text-stroke:0.15px #000;"><span style="display:block;flex:none;transform:scaleX(0.76);transform-origin:50% 50%;letter-spacing:1.0px;margin-right:-1.0px;">Rкаб.</span></div>
<div style="position:absolute;left:397px;top:276px;width:1px;height:16px;background:#000;"></div>
<div style="position:absolute;left:398px;top:276px;width:56px;height:16px;background:#d4d0b4;border-left:1px solid #f0eee0;border-top:1px solid #f0eee0;"></div>
<div style="position:absolute;left:397px;top:277px;width:56px;height:16px;line-height:16px;display:flex;justify-content:center;white-space:nowrap;color:#000;font-size:10px;-webkit-text-stroke:0.15px #000;"><span style="display:block;flex:none;transform:scaleX(0.76);transform-origin:50% 50%;letter-spacing:1.0px;margin-right:-1.0px;">R1</span></div>
<div style="position:absolute;left:454px;top:276px;width:1px;height:16px;background:#000;"></div>
<div style="position:absolute;left:455px;top:276px;width:56px;height:16px;background:#d4d0b4;border-left:1px solid #f0eee0;border-top:1px solid #f0eee0;"></div>
<div style="position:absolute;left:454px;top:277px;width:56px;height:16px;line-height:16px;display:flex;justify-content:center;white-space:nowrap;color:#000;font-size:10px;-webkit-text-stroke:0.15px #000;"><span style="display:block;flex:none;transform:scaleX(0.76);transform-origin:50% 50%;letter-spacing:1.0px;margin-right:-1.0px;">T1</span></div>
<div style="position:absolute;left:511px;top:276px;width:1px;height:16px;background:#000;"></div>
<div style="position:absolute;left:512px;top:276px;width:56px;height:16px;background:#d4d0b4;border-left:1px solid #f0eee0;border-top:1px solid #f0eee0;"></div>
<div style="position:absolute;left:511px;top:277px;width:56px;height:16px;line-height:16px;display:flex;justify-content:center;white-space:nowrap;color:#000;font-size:10px;-webkit-text-stroke:0.15px #000;"><span style="display:block;flex:none;transform:scaleX(0.76);transform-origin:50% 50%;letter-spacing:1.0px;margin-right:-1.0px;">R2</span></div>
<div style="position:absolute;left:568px;top:276px;width:1px;height:16px;background:#000;"></div>
<div style="position:absolute;left:569px;top:276px;width:56px;height:16px;background:#d4d0b4;border-left:1px solid #f0eee0;border-top:1px solid #f0eee0;"></div>
<div style="position:absolute;left:568px;top:277px;width:56px;height:16px;line-height:16px;display:flex;justify-content:center;white-space:nowrap;color:#000;font-size:10px;-webkit-text-stroke:0.15px #000;"><span style="display:block;flex:none;transform:scaleX(0.76);transform-origin:50% 50%;letter-spacing:1.0px;margin-right:-1.0px;">T2</span></div>
<div style="position:absolute;left:625px;top:276px;width:1px;height:16px;background:#000;"></div>
<div style="position:absolute;left:626px;top:276px;width:56px;height:16px;background:#d4d0b4;border-left:1px solid #f0eee0;border-top:1px solid #f0eee0;"></div>
<div style="position:absolute;left:625px;top:277px;width:56px;height:16px;line-height:16px;display:flex;justify-content:center;white-space:nowrap;color:#000;font-size:10px;-webkit-text-stroke:0.15px #000;"><span style="display:block;flex:none;transform:scaleX(0.76);transform-origin:50% 50%;letter-spacing:1.0px;margin-right:-1.0px;">R3</span></div>
<div style="position:absolute;left:682px;top:276px;width:1px;height:16px;background:#000;"></div>
<div style="position:absolute;left:683px;top:276px;width:56px;height:16px;background:#d4d0b4;border-left:1px solid #f0eee0;border-top:1px solid #f0eee0;"></div>
<div style="position:absolute;left:682px;top:277px;width:56px;height:16px;line-height:16px;display:flex;justify-content:center;white-space:nowrap;color:#000;font-size:10px;-webkit-text-stroke:0.15px #000;"><span style="display:block;flex:none;transform:scaleX(0.76);transform-origin:50% 50%;letter-spacing:1.0px;margin-right:-1.0px;">T3</span></div>
<div style="position:absolute;left:739px;top:276px;width:1px;height:16px;background:#000;"></div>
<div style="position:absolute;left:740px;top:276px;width:112px;height:16px;background:#d4d0b4;border-left:1px solid #f0eee0;border-top:1px solid #f0eee0;"></div>
<div style="position:absolute;left:739px;top:277px;width:112px;height:16px;line-height:16px;display:flex;justify-content:center;white-space:nowrap;color:#000;font-size:10px;-webkit-text-stroke:0.15px #000;"><span style="display:block;flex:none;transform:scaleX(0.76);transform-origin:50% 50%;letter-spacing:1.0px;margin-right:-1.0px;">Дата и время</span></div>
<div style="position:absolute;left:852px;top:276px;width:1px;height:16px;background:#000;"></div>
<div style="position:absolute;left:11px;top:293px;width:11px;height:18px;background:#d4d0b4;border-left:1px solid #f4f2e8;border-top:1px solid #f4f2e8;"></div>
<div style="position:absolute;left:11px;top:311px;width:11px;height:1px;background:#000;"></div>
<div style="position:absolute;left:22px;top:293px;width:1px;height:19px;background:#000;"></div>
<div style="position:absolute;left:23px;top:293px;width:60px;height:18px;background:#fff;"></div>
<div style="position:absolute;left:23px;top:311px;width:61px;height:1px;background:#c4c4c4;"></div>
<div style="position:absolute;left:83px;top:293px;width:1px;height:19px;background:#c4c4c4;"></div>
<div style="position:absolute;left:26px;top:293px;width:58px;height:18px;line-height:18px;display:flex;justify-content:flex-start;white-space:nowrap;color:#000;font-size:10px;-webkit-text-stroke:0.2px #000;"><span style="display:block;flex:none;transform:scaleX(0.76);transform-origin:0 50%;letter-spacing:1.0px;">КТПТР-01</span></div>
<div style="position:absolute;left:84px;top:293px;width:56px;height:18px;background:#fff;"></div>
<div style="position:absolute;left:84px;top:311px;width:57px;height:1px;background:#c4c4c4;"></div>
<div style="position:absolute;left:140px;top:293px;width:1px;height:19px;background:#c4c4c4;"></div>
<div style="position:absolute;left:84px;top:293px;width:52px;height:18px;line-height:18px;display:flex;justify-content:flex-end;white-space:nowrap;color:#000;font-size:10px;-webkit-text-stroke:0.2px #000;"><span style="display:block;flex:none;transform:scaleX(0.76);transform-origin:100% 50%;letter-spacing:1.0px;margin-right:-1.0px;">5686</span></div>
<div style="position:absolute;left:141px;top:293px;width:43px;height:18px;background:#fff;"></div>
<div style="position:absolute;left:141px;top:311px;width:44px;height:1px;background:#c4c4c4;"></div>
<div style="position:absolute;left:184px;top:293px;width:1px;height:19px;background:#c4c4c4;"></div>
<div style="position:absolute;left:141px;top:293px;width:43px;height:18px;line-height:18px;display:flex;justify-content:center;white-space:nowrap;color:#000;font-size:10px;-webkit-text-stroke:0.2px #000;"><span style="display:block;flex:none;transform:scaleX(0.76);transform-origin:50% 50%;letter-spacing:1.0px;margin-right:-1.0px;">Pt100</span></div>
<div style="position:absolute;left:185px;top:293px;width:129px;height:18px;background:#fff;"></div>
<div style="position:absolute;left:185px;top:311px;width:130px;height:1px;background:#c4c4c4;"></div>
<div style="position:absolute;left:314px;top:293px;width:1px;height:19px;background:#c4c4c4;"></div>
<div style="position:absolute;left:188px;top:293px;width:127px;height:18px;line-height:18px;display:flex;justify-content:flex-start;white-space:nowrap;color:#000;font-size:10px;-webkit-text-stroke:0.2px #000;"><span style="display:block;flex:none;transform:scaleX(0.76);transform-origin:0 50%;letter-spacing:1.0px;">ООО "ИзТех"</span></div>
<div style="position:absolute;left:315px;top:293px;width:47px;height:18px;background:#fff;"></div>
<div style="position:absolute;left:315px;top:311px;width:48px;height:1px;background:#c4c4c4;"></div>
<div style="position:absolute;left:362px;top:293px;width:1px;height:19px;background:#c4c4c4;"></div>
<div style="position:absolute;left:315px;top:293px;width:47px;height:18px;line-height:18px;display:flex;justify-content:center;white-space:nowrap;color:#000;font-size:10px;-webkit-text-stroke:0.2px #000;"><span style="display:block;flex:none;transform:scaleX(0.76);transform-origin:50% 50%;letter-spacing:1.0px;margin-right:-1.0px;">4-пр.</span></div>
<div style="position:absolute;left:363px;top:293px;width:34px;height:18px;background:#fff;"></div>
<div style="position:absolute;left:363px;top:311px;width:35px;height:1px;background:#c4c4c4;"></div>
<div style="position:absolute;left:397px;top:293px;width:1px;height:19px;background:#c4c4c4;"></div>
<div style="position:absolute;left:398px;top:293px;width:56px;height:18px;background:#fefdd6;"></div>
<div style="position:absolute;left:398px;top:311px;width:57px;height:1px;background:#c8c6a8;"></div>
<div style="position:absolute;left:454px;top:293px;width:1px;height:19px;background:#c8c6a8;"></div>
<div style="position:absolute;left:401px;top:293px;width:54px;height:18px;line-height:18px;display:flex;justify-content:flex-start;white-space:nowrap;color:#0e560e;font-size:10px;-webkit-text-stroke:0.2px #0e560e;"><span style="display:block;flex:none;transform:scaleX(0.76);transform-origin:0 50%;letter-spacing:1.0px;">99.637</span></div>
<div style="position:absolute;left:455px;top:293px;width:56px;height:18px;background:#fefdd6;"></div>
<div style="position:absolute;left:455px;top:311px;width:57px;height:1px;background:#c8c6a8;"></div>
<div style="position:absolute;left:511px;top:293px;width:1px;height:19px;background:#c8c6a8;"></div>
<div style="position:absolute;left:458px;top:293px;width:54px;height:18px;line-height:18px;display:flex;justify-content:flex-start;white-space:nowrap;color:#0c0c62;font-size:10px;-webkit-text-stroke:0.2px #0c0c62;"><span style="display:block;flex:none;transform:scaleX(0.76);transform-origin:0 50%;letter-spacing:1.0px;">-0.900</span></div>
<div style="position:absolute;left:512px;top:293px;width:56px;height:18px;background:#fefdd6;"></div>
<div style="position:absolute;left:512px;top:311px;width:57px;height:1px;background:#c8c6a8;"></div>
<div style="position:absolute;left:568px;top:293px;width:1px;height:19px;background:#c8c6a8;"></div>
<div style="position:absolute;left:515px;top:293px;width:54px;height:18px;line-height:18px;display:flex;justify-content:flex-start;white-space:nowrap;color:#0e560e;font-size:10px;-webkit-text-stroke:0.2px #0e560e;"><span style="display:block;flex:none;transform:scaleX(0.76);transform-origin:0 50%;letter-spacing:1.0px;">138.431</span></div>
<div style="position:absolute;left:569px;top:293px;width:56px;height:18px;background:#fefdd6;"></div>
<div style="position:absolute;left:569px;top:311px;width:57px;height:1px;background:#c8c6a8;"></div>
<div style="position:absolute;left:625px;top:293px;width:1px;height:19px;background:#c8c6a8;"></div>
<div style="position:absolute;left:572px;top:293px;width:54px;height:18px;line-height:18px;display:flex;justify-content:flex-start;white-space:nowrap;color:#0c0c62;font-size:10px;-webkit-text-stroke:0.2px #0c0c62;"><span style="display:block;flex:none;transform:scaleX(0.76);transform-origin:0 50%;letter-spacing:1.0px;">99.902</span></div>
<div style="position:absolute;left:626px;top:293px;width:56px;height:18px;background:#fefdd6;"></div>
<div style="position:absolute;left:626px;top:311px;width:57px;height:1px;background:#c8c6a8;"></div>
<div style="position:absolute;left:682px;top:293px;width:1px;height:19px;background:#c8c6a8;"></div>
<div style="position:absolute;left:683px;top:293px;width:56px;height:18px;background:#fefdd6;"></div>
<div style="position:absolute;left:683px;top:311px;width:57px;height:1px;background:#c8c6a8;"></div>
<div style="position:absolute;left:739px;top:293px;width:1px;height:19px;background:#c8c6a8;"></div>
<div style="position:absolute;left:740px;top:293px;width:112px;height:18px;background:#d8fad8;"></div>
<div style="position:absolute;left:740px;top:311px;width:113px;height:1px;background:#b8d0b0;"></div>
<div style="position:absolute;left:852px;top:293px;width:1px;height:19px;background:#b8d0b0;"></div>
<div style="position:absolute;left:742px;top:293px;width:110px;height:18px;line-height:18px;display:flex;justify-content:flex-start;white-space:nowrap;color:#3a1232;font-size:10px;-webkit-text-stroke:0.2px #3a1232;"><span style="display:block;flex:none;transform:scaleX(0.78);transform-origin:0 50%;letter-spacing:1.0px;">29.03.2007 10:52:32</span></div>
<div style="position:absolute;left:11px;top:312px;width:11px;height:18px;background:#d4d0b4;border-left:1px solid #f4f2e8;border-top:1px solid #f4f2e8;"></div>
<div style="position:absolute;left:11px;top:330px;width:11px;height:1px;background:#000;"></div>
<div style="position:absolute;left:22px;top:312px;width:1px;height:19px;background:#000;"></div>
<div style="position:absolute;left:23px;top:312px;width:60px;height:18px;background:#fff;"></div>
<div style="position:absolute;left:23px;top:330px;width:61px;height:1px;background:#c4c4c4;"></div>
<div style="position:absolute;left:83px;top:312px;width:1px;height:19px;background:#c4c4c4;"></div>
<div style="position:absolute;left:23px;top:312px;width:60px;height:18px;background:#3a6fc8;border:1px dotted #102040;"></div>
<div style="position:absolute;left:26px;top:312px;width:58px;height:18px;line-height:18px;display:flex;justify-content:flex-start;white-space:nowrap;color:#e8f4ff;font-size:10px;-webkit-text-stroke:0.2px #e8f4ff;"><span style="display:block;flex:none;transform:scaleX(0.76);transform-origin:0 50%;letter-spacing:1.0px;">КТПТР-01</span></div>
<div style="position:absolute;left:84px;top:312px;width:56px;height:18px;background:#fff;"></div>
<div style="position:absolute;left:84px;top:330px;width:57px;height:1px;background:#c4c4c4;"></div>
<div style="position:absolute;left:140px;top:312px;width:1px;height:19px;background:#c4c4c4;"></div>
<div style="position:absolute;left:84px;top:312px;width:52px;height:18px;line-height:18px;display:flex;justify-content:flex-end;white-space:nowrap;color:#000;font-size:10px;-webkit-text-stroke:0.2px #000;"><span style="display:block;flex:none;transform:scaleX(0.76);transform-origin:100% 50%;letter-spacing:1.0px;margin-right:-1.0px;">5687</span></div>
<div style="position:absolute;left:141px;top:312px;width:43px;height:18px;background:#fff;"></div>
<div style="position:absolute;left:141px;top:330px;width:44px;height:1px;background:#c4c4c4;"></div>
<div style="position:absolute;left:184px;top:312px;width:1px;height:19px;background:#c4c4c4;"></div>
<div style="position:absolute;left:141px;top:312px;width:43px;height:18px;line-height:18px;display:flex;justify-content:center;white-space:nowrap;color:#000;font-size:10px;-webkit-text-stroke:0.2px #000;"><span style="display:block;flex:none;transform:scaleX(0.76);transform-origin:50% 50%;letter-spacing:1.0px;margin-right:-1.0px;">Pt100</span></div>
<div style="position:absolute;left:185px;top:312px;width:129px;height:18px;background:#fff;"></div>
<div style="position:absolute;left:185px;top:330px;width:130px;height:1px;background:#c4c4c4;"></div>
<div style="position:absolute;left:314px;top:312px;width:1px;height:19px;background:#c4c4c4;"></div>
<div style="position:absolute;left:188px;top:312px;width:127px;height:18px;line-height:18px;display:flex;justify-content:flex-start;white-space:nowrap;color:#000;font-size:10px;-webkit-text-stroke:0.2px #000;"><span style="display:block;flex:none;transform:scaleX(0.76);transform-origin:0 50%;letter-spacing:1.0px;">ООО "ИзТех"</span></div>
<div style="position:absolute;left:315px;top:312px;width:47px;height:18px;background:#fff;"></div>
<div style="position:absolute;left:315px;top:330px;width:48px;height:1px;background:#c4c4c4;"></div>
<div style="position:absolute;left:362px;top:312px;width:1px;height:19px;background:#c4c4c4;"></div>
<div style="position:absolute;left:315px;top:312px;width:47px;height:18px;line-height:18px;display:flex;justify-content:center;white-space:nowrap;color:#000;font-size:10px;-webkit-text-stroke:0.2px #000;"><span style="display:block;flex:none;transform:scaleX(0.76);transform-origin:50% 50%;letter-spacing:1.0px;margin-right:-1.0px;">4-пр.</span></div>
<div style="position:absolute;left:363px;top:312px;width:34px;height:18px;background:#fff;"></div>
<div style="position:absolute;left:363px;top:330px;width:35px;height:1px;background:#c4c4c4;"></div>
<div style="position:absolute;left:397px;top:312px;width:1px;height:19px;background:#c4c4c4;"></div>
<div style="position:absolute;left:398px;top:312px;width:56px;height:18px;background:#fefdd6;"></div>
<div style="position:absolute;left:398px;top:330px;width:57px;height:1px;background:#c8c6a8;"></div>
<div style="position:absolute;left:454px;top:312px;width:1px;height:19px;background:#c8c6a8;"></div>
<div style="position:absolute;left:401px;top:312px;width:54px;height:18px;line-height:18px;display:flex;justify-content:flex-start;white-space:nowrap;color:#0e560e;font-size:10px;-webkit-text-stroke:0.2px #0e560e;"><span style="display:block;flex:none;transform:scaleX(0.76);transform-origin:0 50%;letter-spacing:1.0px;">99.631</span></div>
<div style="position:absolute;left:455px;top:312px;width:56px;height:18px;background:#fefdd6;"></div>
<div style="position:absolute;left:455px;top:330px;width:57px;height:1px;background:#c8c6a8;"></div>
<div style="position:absolute;left:511px;top:312px;width:1px;height:19px;background:#c8c6a8;"></div>
<div style="position:absolute;left:458px;top:312px;width:54px;height:18px;line-height:18px;display:flex;justify-content:flex-start;white-space:nowrap;color:#0c0c62;font-size:10px;-webkit-text-stroke:0.2px #0c0c62;"><span style="display:block;flex:none;transform:scaleX(0.76);transform-origin:0 50%;letter-spacing:1.0px;">-0.900</span></div>
<div style="position:absolute;left:512px;top:312px;width:56px;height:18px;background:#fefdd6;"></div>
<div style="position:absolute;left:512px;top:330px;width:57px;height:1px;background:#c8c6a8;"></div>
<div style="position:absolute;left:568px;top:312px;width:1px;height:19px;background:#c8c6a8;"></div>
<div style="position:absolute;left:515px;top:312px;width:54px;height:18px;line-height:18px;display:flex;justify-content:flex-start;white-space:nowrap;color:#0e560e;font-size:10px;-webkit-text-stroke:0.2px #0e560e;"><span style="display:block;flex:none;transform:scaleX(0.76);transform-origin:0 50%;letter-spacing:1.0px;">138.482</span></div>
<div style="position:absolute;left:569px;top:312px;width:56px;height:18px;background:#fefdd6;"></div>
<div style="position:absolute;left:569px;top:330px;width:57px;height:1px;background:#c8c6a8;"></div>
<div style="position:absolute;left:625px;top:312px;width:1px;height:19px;background:#c8c6a8;"></div>
<div style="position:absolute;left:572px;top:312px;width:54px;height:18px;line-height:18px;display:flex;justify-content:flex-start;white-space:nowrap;color:#0c0c62;font-size:10px;-webkit-text-stroke:0.2px #0c0c62;"><span style="display:block;flex:none;transform:scaleX(0.76);transform-origin:0 50%;letter-spacing:1.0px;">99.902</span></div>
<div style="position:absolute;left:626px;top:312px;width:56px;height:18px;background:#fefdd6;"></div>
<div style="position:absolute;left:626px;top:330px;width:57px;height:1px;background:#c8c6a8;"></div>
<div style="position:absolute;left:682px;top:312px;width:1px;height:19px;background:#c8c6a8;"></div>
<div style="position:absolute;left:683px;top:312px;width:56px;height:18px;background:#fefdd6;"></div>
<div style="position:absolute;left:683px;top:330px;width:57px;height:1px;background:#c8c6a8;"></div>
<div style="position:absolute;left:739px;top:312px;width:1px;height:19px;background:#c8c6a8;"></div>
<div style="position:absolute;left:740px;top:312px;width:112px;height:18px;background:#d8fad8;"></div>
<div style="position:absolute;left:740px;top:330px;width:113px;height:1px;background:#b8d0b0;"></div>
<div style="position:absolute;left:852px;top:312px;width:1px;height:19px;background:#b8d0b0;"></div>
<div style="position:absolute;left:742px;top:312px;width:110px;height:18px;line-height:18px;display:flex;justify-content:flex-start;white-space:nowrap;color:#3a1232;font-size:10px;-webkit-text-stroke:0.2px #3a1232;"><span style="display:block;flex:none;transform:scaleX(0.78);transform-origin:0 50%;letter-spacing:1.0px;">29.03.2007 10:52:32</span></div>
<div style="position:absolute;left:11px;top:331px;width:11px;height:18px;background:#d4d0b4;border-left:1px solid #f4f2e8;border-top:1px solid #f4f2e8;"></div>
<div style="position:absolute;left:11px;top:349px;width:11px;height:1px;background:#000;"></div>
<div style="position:absolute;left:22px;top:331px;width:1px;height:19px;background:#000;"></div>
<div style="position:absolute;left:23px;top:331px;width:60px;height:18px;background:#fff;"></div>
<div style="position:absolute;left:23px;top:349px;width:61px;height:1px;background:#c4c4c4;"></div>
<div style="position:absolute;left:83px;top:331px;width:1px;height:19px;background:#c4c4c4;"></div>
<div style="position:absolute;left:26px;top:331px;width:58px;height:18px;line-height:18px;display:flex;justify-content:flex-start;white-space:nowrap;color:#000;font-size:10px;-webkit-text-stroke:0.2px #000;"><span style="display:block;flex:none;transform:scaleX(0.76);transform-origin:0 50%;letter-spacing:1.0px;">ПТСВ-5</span></div>
<div style="position:absolute;left:84px;top:331px;width:56px;height:18px;background:#fff;"></div>
<div style="position:absolute;left:84px;top:349px;width:57px;height:1px;background:#c4c4c4;"></div>
<div style="position:absolute;left:140px;top:331px;width:1px;height:19px;background:#c4c4c4;"></div>
<div style="position:absolute;left:84px;top:331px;width:52px;height:18px;line-height:18px;display:flex;justify-content:flex-end;white-space:nowrap;color:#000;font-size:10px;-webkit-text-stroke:0.2px #000;"><span style="display:block;flex:none;transform:scaleX(0.76);transform-origin:100% 50%;letter-spacing:1.0px;margin-right:-1.0px;">200</span></div>
<div style="position:absolute;left:141px;top:331px;width:43px;height:18px;background:#fff;"></div>
<div style="position:absolute;left:141px;top:349px;width:44px;height:1px;background:#c4c4c4;"></div>
<div style="position:absolute;left:184px;top:331px;width:1px;height:19px;background:#c4c4c4;"></div>
<div style="position:absolute;left:141px;top:331px;width:43px;height:18px;line-height:18px;display:flex;justify-content:center;white-space:nowrap;color:#000;font-size:10px;-webkit-text-stroke:0.2px #000;"><span style="display:block;flex:none;transform:scaleX(0.76);transform-origin:50% 50%;letter-spacing:1.0px;margin-right:-1.0px;">Pt100</span></div>
<div style="position:absolute;left:185px;top:331px;width:129px;height:18px;background:#fff;"></div>
<div style="position:absolute;left:185px;top:349px;width:130px;height:1px;background:#c4c4c4;"></div>
<div style="position:absolute;left:314px;top:331px;width:1px;height:19px;background:#c4c4c4;"></div>
<div style="position:absolute;left:188px;top:331px;width:127px;height:18px;line-height:18px;display:flex;justify-content:flex-start;white-space:nowrap;color:#000;font-size:10px;-webkit-text-stroke:0.2px #000;"><span style="display:block;flex:none;transform:scaleX(0.76);transform-origin:0 50%;letter-spacing:1.0px;">ООО "ИзТех"</span></div>
<div style="position:absolute;left:315px;top:331px;width:47px;height:18px;background:#fff;"></div>
<div style="position:absolute;left:315px;top:349px;width:48px;height:1px;background:#c4c4c4;"></div>
<div style="position:absolute;left:362px;top:331px;width:1px;height:19px;background:#c4c4c4;"></div>
<div style="position:absolute;left:315px;top:331px;width:47px;height:18px;line-height:18px;display:flex;justify-content:center;white-space:nowrap;color:#000;font-size:10px;-webkit-text-stroke:0.2px #000;"><span style="display:block;flex:none;transform:scaleX(0.76);transform-origin:50% 50%;letter-spacing:1.0px;margin-right:-1.0px;">4-пр.</span></div>
<div style="position:absolute;left:363px;top:331px;width:34px;height:18px;background:#fff;"></div>
<div style="position:absolute;left:363px;top:349px;width:35px;height:1px;background:#c4c4c4;"></div>
<div style="position:absolute;left:397px;top:331px;width:1px;height:19px;background:#c4c4c4;"></div>
<div style="position:absolute;left:363px;top:331px;width:34px;height:18px;line-height:18px;display:flex;justify-content:center;white-space:nowrap;color:#000;font-size:10px;-webkit-text-stroke:0.2px #000;"><span style="display:block;flex:none;transform:scaleX(0.76);transform-origin:50% 50%;letter-spacing:1.0px;margin-right:-1.0px;">0</span></div>
<div style="position:absolute;left:398px;top:331px;width:56px;height:18px;background:#fefdd6;"></div>
<div style="position:absolute;left:398px;top:349px;width:57px;height:1px;background:#c8c6a8;"></div>
<div style="position:absolute;left:454px;top:331px;width:1px;height:19px;background:#c8c6a8;"></div>
<div style="position:absolute;left:401px;top:331px;width:54px;height:18px;line-height:18px;display:flex;justify-content:flex-start;white-space:nowrap;color:#0e560e;font-size:10px;-webkit-text-stroke:0.2px #0e560e;"><span style="display:block;flex:none;transform:scaleX(0.76);transform-origin:0 50%;letter-spacing:1.0px;">99.999</span></div>
<div style="position:absolute;left:455px;top:331px;width:56px;height:18px;background:#fefdd6;"></div>
<div style="position:absolute;left:455px;top:349px;width:57px;height:1px;background:#c8c6a8;"></div>
<div style="position:absolute;left:511px;top:331px;width:1px;height:19px;background:#c8c6a8;"></div>
<div style="position:absolute;left:458px;top:331px;width:54px;height:18px;line-height:18px;display:flex;justify-content:flex-start;white-space:nowrap;color:#0c0c62;font-size:10px;-webkit-text-stroke:0.2px #0c0c62;"><span style="display:block;flex:none;transform:scaleX(0.76);transform-origin:0 50%;letter-spacing:1.0px;">0</span></div>
<div style="position:absolute;left:512px;top:331px;width:56px;height:18px;background:#fefdd6;"></div>
<div style="position:absolute;left:512px;top:349px;width:57px;height:1px;background:#c8c6a8;"></div>
<div style="position:absolute;left:568px;top:331px;width:1px;height:19px;background:#c8c6a8;"></div>
<div style="position:absolute;left:515px;top:331px;width:54px;height:18px;line-height:18px;display:flex;justify-content:flex-start;white-space:nowrap;color:#0e560e;font-size:10px;-webkit-text-stroke:0.2px #0e560e;"><span style="display:block;flex:none;transform:scaleX(0.76);transform-origin:0 50%;letter-spacing:1.0px;">138.51</span></div>
<div style="position:absolute;left:569px;top:331px;width:56px;height:18px;background:#fefdd6;"></div>
<div style="position:absolute;left:569px;top:349px;width:57px;height:1px;background:#c8c6a8;"></div>
<div style="position:absolute;left:625px;top:331px;width:1px;height:19px;background:#c8c6a8;"></div>
<div style="position:absolute;left:572px;top:331px;width:54px;height:18px;line-height:18px;display:flex;justify-content:flex-start;white-space:nowrap;color:#0c0c62;font-size:10px;-webkit-text-stroke:0.2px #0c0c62;"><span style="display:block;flex:none;transform:scaleX(0.76);transform-origin:0 50%;letter-spacing:1.0px;">100</span></div>
<div style="position:absolute;left:626px;top:331px;width:56px;height:18px;background:#fefdd6;"></div>
<div style="position:absolute;left:626px;top:349px;width:57px;height:1px;background:#c8c6a8;"></div>
<div style="position:absolute;left:682px;top:331px;width:1px;height:19px;background:#c8c6a8;"></div>
<div style="position:absolute;left:683px;top:331px;width:56px;height:18px;background:#fefdd6;"></div>
<div style="position:absolute;left:683px;top:349px;width:57px;height:1px;background:#c8c6a8;"></div>
<div style="position:absolute;left:739px;top:331px;width:1px;height:19px;background:#c8c6a8;"></div>
<div style="position:absolute;left:740px;top:331px;width:112px;height:18px;background:#d8fad8;"></div>
<div style="position:absolute;left:740px;top:349px;width:113px;height:1px;background:#b8d0b0;"></div>
<div style="position:absolute;left:852px;top:331px;width:1px;height:19px;background:#b8d0b0;"></div>
<div style="position:absolute;left:11px;top:350px;width:11px;height:18px;background:#d4d0b4;border-left:1px solid #f4f2e8;border-top:1px solid #f4f2e8;"></div>
<div style="position:absolute;left:11px;top:368px;width:11px;height:1px;background:#000;"></div>
<div style="position:absolute;left:22px;top:350px;width:1px;height:19px;background:#000;"></div>
<div style="position:absolute;left:23px;top:350px;width:60px;height:18px;background:#fff;"></div>
<div style="position:absolute;left:23px;top:368px;width:61px;height:1px;background:#c4c4c4;"></div>
<div style="position:absolute;left:83px;top:350px;width:1px;height:19px;background:#c4c4c4;"></div>
<div style="position:absolute;left:26px;top:350px;width:58px;height:18px;line-height:18px;display:flex;justify-content:flex-start;white-space:nowrap;color:#000;font-size:10px;-webkit-text-stroke:0.2px #000;"><span style="display:block;flex:none;transform:scaleX(0.76);transform-origin:0 50%;letter-spacing:1.0px;">ПТСВ-5</span></div>
<div style="position:absolute;left:84px;top:350px;width:56px;height:18px;background:#fff;"></div>
<div style="position:absolute;left:84px;top:368px;width:57px;height:1px;background:#c4c4c4;"></div>
<div style="position:absolute;left:140px;top:350px;width:1px;height:19px;background:#c4c4c4;"></div>
<div style="position:absolute;left:84px;top:350px;width:52px;height:18px;line-height:18px;display:flex;justify-content:flex-end;white-space:nowrap;color:#000;font-size:10px;-webkit-text-stroke:0.2px #000;"><span style="display:block;flex:none;transform:scaleX(0.76);transform-origin:100% 50%;letter-spacing:1.0px;margin-right:-1.0px;">201</span></div>
<div style="position:absolute;left:141px;top:350px;width:43px;height:18px;background:#fff;"></div>
<div style="position:absolute;left:141px;top:368px;width:44px;height:1px;background:#c4c4c4;"></div>
<div style="position:absolute;left:184px;top:350px;width:1px;height:19px;background:#c4c4c4;"></div>
<div style="position:absolute;left:141px;top:350px;width:43px;height:18px;line-height:18px;display:flex;justify-content:center;white-space:nowrap;color:#000;font-size:10px;-webkit-text-stroke:0.2px #000;"><span style="display:block;flex:none;transform:scaleX(0.76);transform-origin:50% 50%;letter-spacing:1.0px;margin-right:-1.0px;">Pt100</span></div>
<div style="position:absolute;left:185px;top:350px;width:129px;height:18px;background:#fff;"></div>
<div style="position:absolute;left:185px;top:368px;width:130px;height:1px;background:#c4c4c4;"></div>
<div style="position:absolute;left:314px;top:350px;width:1px;height:19px;background:#c4c4c4;"></div>
<div style="position:absolute;left:188px;top:350px;width:127px;height:18px;line-height:18px;display:flex;justify-content:flex-start;white-space:nowrap;color:#000;font-size:10px;-webkit-text-stroke:0.2px #000;"><span style="display:block;flex:none;transform:scaleX(0.76);transform-origin:0 50%;letter-spacing:1.0px;">ООО "ИзТех"</span></div>
<div style="position:absolute;left:315px;top:350px;width:47px;height:18px;background:#fff;"></div>
<div style="position:absolute;left:315px;top:368px;width:48px;height:1px;background:#c4c4c4;"></div>
<div style="position:absolute;left:362px;top:350px;width:1px;height:19px;background:#c4c4c4;"></div>
<div style="position:absolute;left:315px;top:350px;width:47px;height:18px;line-height:18px;display:flex;justify-content:center;white-space:nowrap;color:#000;font-size:10px;-webkit-text-stroke:0.2px #000;"><span style="display:block;flex:none;transform:scaleX(0.76);transform-origin:50% 50%;letter-spacing:1.0px;margin-right:-1.0px;">4-пр.</span></div>
<div style="position:absolute;left:363px;top:350px;width:34px;height:18px;background:#fff;"></div>
<div style="position:absolute;left:363px;top:368px;width:35px;height:1px;background:#c4c4c4;"></div>
<div style="position:absolute;left:397px;top:350px;width:1px;height:19px;background:#c4c4c4;"></div>
<div style="position:absolute;left:363px;top:350px;width:34px;height:18px;line-height:18px;display:flex;justify-content:center;white-space:nowrap;color:#000;font-size:10px;-webkit-text-stroke:0.2px #000;"><span style="display:block;flex:none;transform:scaleX(0.76);transform-origin:50% 50%;letter-spacing:1.0px;margin-right:-1.0px;">0</span></div>
<div style="position:absolute;left:398px;top:350px;width:56px;height:18px;background:#fefdd6;"></div>
<div style="position:absolute;left:398px;top:368px;width:57px;height:1px;background:#c8c6a8;"></div>
<div style="position:absolute;left:454px;top:350px;width:1px;height:19px;background:#c8c6a8;"></div>
<div style="position:absolute;left:401px;top:350px;width:54px;height:18px;line-height:18px;display:flex;justify-content:flex-start;white-space:nowrap;color:#0e560e;font-size:10px;-webkit-text-stroke:0.2px #0e560e;"><span style="display:block;flex:none;transform:scaleX(0.76);transform-origin:0 50%;letter-spacing:1.0px;">103.90</span></div>
<div style="position:absolute;left:455px;top:350px;width:56px;height:18px;background:#fefdd6;"></div>
<div style="position:absolute;left:455px;top:368px;width:57px;height:1px;background:#c8c6a8;"></div>
<div style="position:absolute;left:511px;top:350px;width:1px;height:19px;background:#c8c6a8;"></div>
<div style="position:absolute;left:458px;top:350px;width:54px;height:18px;line-height:18px;display:flex;justify-content:flex-start;white-space:nowrap;color:#0c0c62;font-size:10px;-webkit-text-stroke:0.2px #0c0c62;"><span style="display:block;flex:none;transform:scaleX(0.76);transform-origin:0 50%;letter-spacing:1.0px;">10</span></div>
<div style="position:absolute;left:512px;top:350px;width:56px;height:18px;background:#fefdd6;"></div>
<div style="position:absolute;left:512px;top:368px;width:57px;height:1px;background:#c8c6a8;"></div>
<div style="position:absolute;left:568px;top:350px;width:1px;height:19px;background:#c8c6a8;"></div>
<div style="position:absolute;left:515px;top:350px;width:54px;height:18px;line-height:18px;display:flex;justify-content:flex-start;white-space:nowrap;color:#0e560e;font-size:10px;-webkit-text-stroke:0.2px #0e560e;"><span style="display:block;flex:none;transform:scaleX(0.76);transform-origin:0 50%;letter-spacing:1.0px;">130.90</span></div>
<div style="position:absolute;left:569px;top:350px;width:56px;height:18px;background:#fefdd6;"></div>
<div style="position:absolute;left:569px;top:368px;width:57px;height:1px;background:#c8c6a8;"></div>
<div style="position:absolute;left:625px;top:350px;width:1px;height:19px;background:#c8c6a8;"></div>
<div style="position:absolute;left:572px;top:350px;width:54px;height:18px;line-height:18px;display:flex;justify-content:flex-start;white-space:nowrap;color:#0c0c62;font-size:10px;-webkit-text-stroke:0.2px #0c0c62;"><span style="display:block;flex:none;transform:scaleX(0.76);transform-origin:0 50%;letter-spacing:1.0px;">80</span></div>
<div style="position:absolute;left:626px;top:350px;width:56px;height:18px;background:#fefdd6;"></div>
<div style="position:absolute;left:626px;top:368px;width:57px;height:1px;background:#c8c6a8;"></div>
<div style="position:absolute;left:682px;top:350px;width:1px;height:19px;background:#c8c6a8;"></div>
<div style="position:absolute;left:629px;top:350px;width:54px;height:18px;line-height:18px;display:flex;justify-content:flex-start;white-space:nowrap;color:#0e560e;font-size:10px;-webkit-text-stroke:0.2px #0e560e;"><span style="display:block;flex:none;transform:scaleX(0.76);transform-origin:0 50%;letter-spacing:1.0px;">153.58</span></div>
<div style="position:absolute;left:683px;top:350px;width:56px;height:18px;background:#fefdd6;"></div>
<div style="position:absolute;left:683px;top:368px;width:57px;height:1px;background:#c8c6a8;"></div>
<div style="position:absolute;left:739px;top:350px;width:1px;height:19px;background:#c8c6a8;"></div>
<div style="position:absolute;left:686px;top:350px;width:54px;height:18px;line-height:18px;display:flex;justify-content:flex-start;white-space:nowrap;color:#0c0c62;font-size:10px;-webkit-text-stroke:0.2px #0c0c62;"><span style="display:block;flex:none;transform:scaleX(0.76);transform-origin:0 50%;letter-spacing:1.0px;">140</span></div>
<div style="position:absolute;left:740px;top:350px;width:112px;height:18px;background:#d8fad8;"></div>
<div style="position:absolute;left:740px;top:368px;width:113px;height:1px;background:#b8d0b0;"></div>
<div style="position:absolute;left:852px;top:350px;width:1px;height:19px;background:#b8d0b0;"></div>
<div style="position:absolute;left:11px;top:369px;width:11px;height:18px;background:#d4d0b4;border-left:1px solid #f4f2e8;border-top:1px solid #f4f2e8;"></div>
<div style="position:absolute;left:11px;top:387px;width:11px;height:1px;background:#000;"></div>
<div style="position:absolute;left:22px;top:369px;width:1px;height:19px;background:#000;"></div>
<div style="position:absolute;left:23px;top:369px;width:60px;height:18px;background:#fff;"></div>
<div style="position:absolute;left:23px;top:387px;width:61px;height:1px;background:#c4c4c4;"></div>
<div style="position:absolute;left:83px;top:369px;width:1px;height:19px;background:#c4c4c4;"></div>
<div style="position:absolute;left:26px;top:369px;width:58px;height:18px;line-height:18px;display:flex;justify-content:flex-start;white-space:nowrap;color:#000;font-size:10px;-webkit-text-stroke:0.2px #000;"><span style="display:block;flex:none;transform:scaleX(0.76);transform-origin:0 50%;letter-spacing:1.0px;">ПТСВ-Р1</span></div>
<div style="position:absolute;left:84px;top:369px;width:56px;height:18px;background:#fff;"></div>
<div style="position:absolute;left:84px;top:387px;width:57px;height:1px;background:#c4c4c4;"></div>
<div style="position:absolute;left:140px;top:369px;width:1px;height:19px;background:#c4c4c4;"></div>
<div style="position:absolute;left:84px;top:369px;width:52px;height:18px;line-height:18px;display:flex;justify-content:flex-end;white-space:nowrap;color:#000;font-size:10px;-webkit-text-stroke:0.2px #000;"><span style="display:block;flex:none;transform:scaleX(0.76);transform-origin:100% 50%;letter-spacing:1.0px;margin-right:-1.0px;">100</span></div>
<div style="position:absolute;left:141px;top:369px;width:43px;height:18px;background:#fff;"></div>
<div style="position:absolute;left:141px;top:387px;width:44px;height:1px;background:#c4c4c4;"></div>
<div style="position:absolute;left:184px;top:369px;width:1px;height:19px;background:#c4c4c4;"></div>
<div style="position:absolute;left:141px;top:369px;width:43px;height:18px;line-height:18px;display:flex;justify-content:center;white-space:nowrap;color:#000;font-size:10px;-webkit-text-stroke:0.2px #000;"><span style="display:block;flex:none;transform:scaleX(0.76);transform-origin:50% 50%;letter-spacing:1.0px;margin-right:-1.0px;">100П</span></div>
<div style="position:absolute;left:185px;top:369px;width:129px;height:18px;background:#fff;"></div>
<div style="position:absolute;left:185px;top:387px;width:130px;height:1px;background:#c4c4c4;"></div>
<div style="position:absolute;left:314px;top:369px;width:1px;height:19px;background:#c4c4c4;"></div>
<div style="position:absolute;left:188px;top:369px;width:127px;height:18px;line-height:18px;display:flex;justify-content:flex-start;white-space:nowrap;color:#000;font-size:10px;-webkit-text-stroke:0.2px #000;"><span style="display:block;flex:none;transform:scaleX(0.76);transform-origin:0 50%;letter-spacing:1.0px;">ООО "ИзТех"</span></div>
<div style="position:absolute;left:315px;top:369px;width:47px;height:18px;background:#fff;"></div>
<div style="position:absolute;left:315px;top:387px;width:48px;height:1px;background:#c4c4c4;"></div>
<div style="position:absolute;left:362px;top:369px;width:1px;height:19px;background:#c4c4c4;"></div>
<div style="position:absolute;left:315px;top:369px;width:47px;height:18px;line-height:18px;display:flex;justify-content:center;white-space:nowrap;color:#000;font-size:10px;-webkit-text-stroke:0.2px #000;"><span style="display:block;flex:none;transform:scaleX(0.76);transform-origin:50% 50%;letter-spacing:1.0px;margin-right:-1.0px;">4-пр.</span></div>
<div style="position:absolute;left:363px;top:369px;width:34px;height:18px;background:#fff;"></div>
<div style="position:absolute;left:363px;top:387px;width:35px;height:1px;background:#c4c4c4;"></div>
<div style="position:absolute;left:397px;top:369px;width:1px;height:19px;background:#c4c4c4;"></div>
<div style="position:absolute;left:363px;top:369px;width:34px;height:18px;line-height:18px;display:flex;justify-content:center;white-space:nowrap;color:#000;font-size:10px;-webkit-text-stroke:0.2px #000;"><span style="display:block;flex:none;transform:scaleX(0.76);transform-origin:50% 50%;letter-spacing:1.0px;margin-right:-1.0px;">0</span></div>
<div style="position:absolute;left:398px;top:369px;width:56px;height:18px;background:#fefdd6;"></div>
<div style="position:absolute;left:398px;top:387px;width:57px;height:1px;background:#c8c6a8;"></div>
<div style="position:absolute;left:454px;top:369px;width:1px;height:19px;background:#c8c6a8;"></div>
<div style="position:absolute;left:401px;top:369px;width:54px;height:18px;line-height:18px;display:flex;justify-content:flex-start;white-space:nowrap;color:#0e560e;font-size:10px;-webkit-text-stroke:0.2px #0e560e;"><span style="display:block;flex:none;transform:scaleX(0.76);transform-origin:0 50%;letter-spacing:1.0px;">100</span></div>
<div style="position:absolute;left:455px;top:369px;width:56px;height:18px;background:#fefdd6;"></div>
<div style="position:absolute;left:455px;top:387px;width:57px;height:1px;background:#c8c6a8;"></div>
<div style="position:absolute;left:511px;top:369px;width:1px;height:19px;background:#c8c6a8;"></div>
<div style="position:absolute;left:458px;top:369px;width:54px;height:18px;line-height:18px;display:flex;justify-content:flex-start;white-space:nowrap;color:#0c0c62;font-size:10px;-webkit-text-stroke:0.2px #0c0c62;"><span style="display:block;flex:none;transform:scaleX(0.76);transform-origin:0 50%;letter-spacing:1.0px;">0</span></div>
<div style="position:absolute;left:512px;top:369px;width:56px;height:18px;background:#fefdd6;"></div>
<div style="position:absolute;left:512px;top:387px;width:57px;height:1px;background:#c8c6a8;"></div>
<div style="position:absolute;left:568px;top:369px;width:1px;height:19px;background:#c8c6a8;"></div>
<div style="position:absolute;left:515px;top:369px;width:54px;height:18px;line-height:18px;display:flex;justify-content:flex-start;white-space:nowrap;color:#0e560e;font-size:10px;-webkit-text-stroke:0.2px #0e560e;"><span style="display:block;flex:none;transform:scaleX(0.76);transform-origin:0 50%;letter-spacing:1.0px;">139.11</span></div>
<div style="position:absolute;left:569px;top:369px;width:56px;height:18px;background:#fefdd6;"></div>
<div style="position:absolute;left:569px;top:387px;width:57px;height:1px;background:#c8c6a8;"></div>
<div style="position:absolute;left:625px;top:369px;width:1px;height:19px;background:#c8c6a8;"></div>
<div style="position:absolute;left:572px;top:369px;width:54px;height:18px;line-height:18px;display:flex;justify-content:flex-start;white-space:nowrap;color:#0c0c62;font-size:10px;-webkit-text-stroke:0.2px #0c0c62;"><span style="display:block;flex:none;transform:scaleX(0.76);transform-origin:0 50%;letter-spacing:1.0px;">100</span></div>
<div style="position:absolute;left:626px;top:369px;width:56px;height:18px;background:#fefdd6;"></div>
<div style="position:absolute;left:626px;top:387px;width:57px;height:1px;background:#c8c6a8;"></div>
<div style="position:absolute;left:682px;top:369px;width:1px;height:19px;background:#c8c6a8;"></div>
<div style="position:absolute;left:683px;top:369px;width:56px;height:18px;background:#fefdd6;"></div>
<div style="position:absolute;left:683px;top:387px;width:57px;height:1px;background:#c8c6a8;"></div>
<div style="position:absolute;left:739px;top:369px;width:1px;height:19px;background:#c8c6a8;"></div>
<div style="position:absolute;left:740px;top:369px;width:112px;height:18px;background:#d8fad8;"></div>
<div style="position:absolute;left:740px;top:387px;width:113px;height:1px;background:#b8d0b0;"></div>
<div style="position:absolute;left:852px;top:369px;width:1px;height:19px;background:#b8d0b0;"></div>
<div style="position:absolute;left:11px;top:388px;width:11px;height:18px;background:#d4d0b4;border-left:1px solid #f4f2e8;border-top:1px solid #f4f2e8;"></div>
<div style="position:absolute;left:11px;top:406px;width:11px;height:1px;background:#000;"></div>
<div style="position:absolute;left:22px;top:388px;width:1px;height:19px;background:#000;"></div>
<div style="position:absolute;left:23px;top:388px;width:60px;height:18px;background:#fff;"></div>
<div style="position:absolute;left:23px;top:406px;width:61px;height:1px;background:#c4c4c4;"></div>
<div style="position:absolute;left:83px;top:388px;width:1px;height:19px;background:#c4c4c4;"></div>
<div style="position:absolute;left:26px;top:388px;width:58px;height:18px;line-height:18px;display:flex;justify-content:flex-start;white-space:nowrap;color:#000;font-size:10px;-webkit-text-stroke:0.2px #000;"><span style="display:block;flex:none;transform:scaleX(0.76);transform-origin:0 50%;letter-spacing:1.0px;">ПТСВ-Р1</span></div>
<div style="position:absolute;left:84px;top:388px;width:56px;height:18px;background:#fff;"></div>
<div style="position:absolute;left:84px;top:406px;width:57px;height:1px;background:#c4c4c4;"></div>
<div style="position:absolute;left:140px;top:388px;width:1px;height:19px;background:#c4c4c4;"></div>
<div style="position:absolute;left:84px;top:388px;width:52px;height:18px;line-height:18px;display:flex;justify-content:flex-end;white-space:nowrap;color:#000;font-size:10px;-webkit-text-stroke:0.2px #000;"><span style="display:block;flex:none;transform:scaleX(0.76);transform-origin:100% 50%;letter-spacing:1.0px;margin-right:-1.0px;">101</span></div>
<div style="position:absolute;left:141px;top:388px;width:43px;height:18px;background:#fff;"></div>
<div style="position:absolute;left:141px;top:406px;width:44px;height:1px;background:#c4c4c4;"></div>
<div style="position:absolute;left:184px;top:388px;width:1px;height:19px;background:#c4c4c4;"></div>
<div style="position:absolute;left:141px;top:388px;width:43px;height:18px;line-height:18px;display:flex;justify-content:center;white-space:nowrap;color:#000;font-size:10px;-webkit-text-stroke:0.2px #000;"><span style="display:block;flex:none;transform:scaleX(0.76);transform-origin:50% 50%;letter-spacing:1.0px;margin-right:-1.0px;">100П</span></div>
<div style="position:absolute;left:185px;top:388px;width:129px;height:18px;background:#fff;"></div>
<div style="position:absolute;left:185px;top:406px;width:130px;height:1px;background:#c4c4c4;"></div>
<div style="position:absolute;left:314px;top:388px;width:1px;height:19px;background:#c4c4c4;"></div>
<div style="position:absolute;left:188px;top:388px;width:127px;height:18px;line-height:18px;display:flex;justify-content:flex-start;white-space:nowrap;color:#000;font-size:10px;-webkit-text-stroke:0.2px #000;"><span style="display:block;flex:none;transform:scaleX(0.76);transform-origin:0 50%;letter-spacing:1.0px;">ООО "ИзТех"</span></div>
<div style="position:absolute;left:315px;top:388px;width:47px;height:18px;background:#fff;"></div>
<div style="position:absolute;left:315px;top:406px;width:48px;height:1px;background:#c4c4c4;"></div>
<div style="position:absolute;left:362px;top:388px;width:1px;height:19px;background:#c4c4c4;"></div>
<div style="position:absolute;left:315px;top:388px;width:47px;height:18px;line-height:18px;display:flex;justify-content:center;white-space:nowrap;color:#000;font-size:10px;-webkit-text-stroke:0.2px #000;"><span style="display:block;flex:none;transform:scaleX(0.76);transform-origin:50% 50%;letter-spacing:1.0px;margin-right:-1.0px;">4-пр.</span></div>
<div style="position:absolute;left:363px;top:388px;width:34px;height:18px;background:#fff;"></div>
<div style="position:absolute;left:363px;top:406px;width:35px;height:1px;background:#c4c4c4;"></div>
<div style="position:absolute;left:397px;top:388px;width:1px;height:19px;background:#c4c4c4;"></div>
<div style="position:absolute;left:363px;top:388px;width:34px;height:18px;line-height:18px;display:flex;justify-content:center;white-space:nowrap;color:#000;font-size:10px;-webkit-text-stroke:0.2px #000;"><span style="display:block;flex:none;transform:scaleX(0.76);transform-origin:50% 50%;letter-spacing:1.0px;margin-right:-1.0px;">0</span></div>
<div style="position:absolute;left:398px;top:388px;width:56px;height:18px;background:#fefdd6;"></div>
<div style="position:absolute;left:398px;top:406px;width:57px;height:1px;background:#c8c6a8;"></div>
<div style="position:absolute;left:454px;top:388px;width:1px;height:19px;background:#c8c6a8;"></div>
<div style="position:absolute;left:401px;top:388px;width:54px;height:18px;line-height:18px;display:flex;justify-content:flex-start;white-space:nowrap;color:#0e560e;font-size:10px;-webkit-text-stroke:0.2px #0e560e;"><span style="display:block;flex:none;transform:scaleX(0.76);transform-origin:0 50%;letter-spacing:1.0px;">103.96</span></div>
<div style="position:absolute;left:455px;top:388px;width:56px;height:18px;background:#fefdd6;"></div>
<div style="position:absolute;left:455px;top:406px;width:57px;height:1px;background:#c8c6a8;"></div>
<div style="position:absolute;left:511px;top:388px;width:1px;height:19px;background:#c8c6a8;"></div>
<div style="position:absolute;left:458px;top:388px;width:54px;height:18px;line-height:18px;display:flex;justify-content:flex-start;white-space:nowrap;color:#0c0c62;font-size:10px;-webkit-text-stroke:0.2px #0c0c62;"><span style="display:block;flex:none;transform:scaleX(0.76);transform-origin:0 50%;letter-spacing:1.0px;">10</span></div>
<div style="position:absolute;left:512px;top:388px;width:56px;height:18px;background:#fefdd6;"></div>
<div style="position:absolute;left:512px;top:406px;width:57px;height:1px;background:#c8c6a8;"></div>
<div style="position:absolute;left:568px;top:388px;width:1px;height:19px;background:#c8c6a8;"></div>
<div style="position:absolute;left:515px;top:388px;width:54px;height:18px;line-height:18px;display:flex;justify-content:flex-start;white-space:nowrap;color:#0e560e;font-size:10px;-webkit-text-stroke:0.2px #0e560e;"><span style="display:block;flex:none;transform:scaleX(0.76);transform-origin:0 50%;letter-spacing:1.0px;">131.38</span></div>
<div style="position:absolute;left:569px;top:388px;width:56px;height:18px;background:#fefdd6;"></div>
<div style="position:absolute;left:569px;top:406px;width:57px;height:1px;background:#c8c6a8;"></div>
<div style="position:absolute;left:625px;top:388px;width:1px;height:19px;background:#c8c6a8;"></div>
<div style="position:absolute;left:572px;top:388px;width:54px;height:18px;line-height:18px;display:flex;justify-content:flex-start;white-space:nowrap;color:#0c0c62;font-size:10px;-webkit-text-stroke:0.2px #0c0c62;"><span style="display:block;flex:none;transform:scaleX(0.76);transform-origin:0 50%;letter-spacing:1.0px;">80</span></div>
<div style="position:absolute;left:626px;top:388px;width:56px;height:18px;background:#fefdd6;"></div>
<div style="position:absolute;left:626px;top:406px;width:57px;height:1px;background:#c8c6a8;"></div>
<div style="position:absolute;left:682px;top:388px;width:1px;height:19px;background:#c8c6a8;"></div>
<div style="position:absolute;left:683px;top:388px;width:56px;height:18px;background:#fefdd6;"></div>
<div style="position:absolute;left:683px;top:406px;width:57px;height:1px;background:#c8c6a8;"></div>
<div style="position:absolute;left:739px;top:388px;width:1px;height:19px;background:#c8c6a8;"></div>
<div style="position:absolute;left:740px;top:388px;width:112px;height:18px;background:#d8fad8;"></div>
<div style="position:absolute;left:740px;top:406px;width:113px;height:1px;background:#b8d0b0;"></div>
<div style="position:absolute;left:852px;top:388px;width:1px;height:19px;background:#b8d0b0;"></div>
<div style="position:absolute;left:11px;top:407px;width:11px;height:18px;background:#d4d0b4;border-left:1px solid #f4f2e8;border-top:1px solid #f4f2e8;"></div>
<div style="position:absolute;left:11px;top:425px;width:11px;height:1px;background:#000;"></div>
<div style="position:absolute;left:22px;top:407px;width:1px;height:19px;background:#000;"></div>
<div style="position:absolute;left:23px;top:407px;width:60px;height:18px;background:#fff;"></div>
<div style="position:absolute;left:23px;top:425px;width:61px;height:1px;background:#c4c4c4;"></div>
<div style="position:absolute;left:83px;top:407px;width:1px;height:19px;background:#c4c4c4;"></div>
<div style="position:absolute;left:26px;top:407px;width:58px;height:18px;line-height:18px;display:flex;justify-content:flex-start;white-space:nowrap;color:#000;font-size:10px;-webkit-text-stroke:0.2px #000;"><span style="display:block;flex:none;transform:scaleX(0.76);transform-origin:0 50%;letter-spacing:1.0px;">ПТСВ-Р1</span></div>
<div style="position:absolute;left:84px;top:407px;width:56px;height:18px;background:#fff;"></div>
<div style="position:absolute;left:84px;top:425px;width:57px;height:1px;background:#c4c4c4;"></div>
<div style="position:absolute;left:140px;top:407px;width:1px;height:19px;background:#c4c4c4;"></div>
<div style="position:absolute;left:84px;top:407px;width:52px;height:18px;line-height:18px;display:flex;justify-content:flex-end;white-space:nowrap;color:#000;font-size:10px;-webkit-text-stroke:0.2px #000;"><span style="display:block;flex:none;transform:scaleX(0.76);transform-origin:100% 50%;letter-spacing:1.0px;margin-right:-1.0px;">102</span></div>
<div style="position:absolute;left:141px;top:407px;width:43px;height:18px;background:#fff;"></div>
<div style="position:absolute;left:141px;top:425px;width:44px;height:1px;background:#c4c4c4;"></div>
<div style="position:absolute;left:184px;top:407px;width:1px;height:19px;background:#c4c4c4;"></div>
<div style="position:absolute;left:141px;top:407px;width:43px;height:18px;line-height:18px;display:flex;justify-content:center;white-space:nowrap;color:#000;font-size:10px;-webkit-text-stroke:0.2px #000;"><span style="display:block;flex:none;transform:scaleX(0.76);transform-origin:50% 50%;letter-spacing:1.0px;margin-right:-1.0px;">100П</span></div>
<div style="position:absolute;left:185px;top:407px;width:129px;height:18px;background:#fff;"></div>
<div style="position:absolute;left:185px;top:425px;width:130px;height:1px;background:#c4c4c4;"></div>
<div style="position:absolute;left:314px;top:407px;width:1px;height:19px;background:#c4c4c4;"></div>
<div style="position:absolute;left:188px;top:407px;width:127px;height:18px;line-height:18px;display:flex;justify-content:flex-start;white-space:nowrap;color:#000;font-size:10px;-webkit-text-stroke:0.2px #000;"><span style="display:block;flex:none;transform:scaleX(0.76);transform-origin:0 50%;letter-spacing:1.0px;">ООО "ИзТех"</span></div>
<div style="position:absolute;left:315px;top:407px;width:47px;height:18px;background:#fff;"></div>
<div style="position:absolute;left:315px;top:425px;width:48px;height:1px;background:#c4c4c4;"></div>
<div style="position:absolute;left:362px;top:407px;width:1px;height:19px;background:#c4c4c4;"></div>
<div style="position:absolute;left:315px;top:407px;width:47px;height:18px;line-height:18px;display:flex;justify-content:center;white-space:nowrap;color:#000;font-size:10px;-webkit-text-stroke:0.2px #000;"><span style="display:block;flex:none;transform:scaleX(0.76);transform-origin:50% 50%;letter-spacing:1.0px;margin-right:-1.0px;">4-пр.</span></div>
<div style="position:absolute;left:363px;top:407px;width:34px;height:18px;background:#fff;"></div>
<div style="position:absolute;left:363px;top:425px;width:35px;height:1px;background:#c4c4c4;"></div>
<div style="position:absolute;left:397px;top:407px;width:1px;height:19px;background:#c4c4c4;"></div>
<div style="position:absolute;left:363px;top:407px;width:34px;height:18px;line-height:18px;display:flex;justify-content:center;white-space:nowrap;color:#000;font-size:10px;-webkit-text-stroke:0.2px #000;"><span style="display:block;flex:none;transform:scaleX(0.76);transform-origin:50% 50%;letter-spacing:1.0px;margin-right:-1.0px;">0</span></div>
<div style="position:absolute;left:398px;top:407px;width:56px;height:18px;background:#fefdd6;"></div>
<div style="position:absolute;left:398px;top:425px;width:57px;height:1px;background:#c8c6a8;"></div>
<div style="position:absolute;left:454px;top:407px;width:1px;height:19px;background:#c8c6a8;"></div>
<div style="position:absolute;left:401px;top:407px;width:54px;height:18px;line-height:18px;display:flex;justify-content:flex-start;white-space:nowrap;color:#0e560e;font-size:10px;-webkit-text-stroke:0.2px #0e560e;"><span style="display:block;flex:none;transform:scaleX(0.76);transform-origin:0 50%;letter-spacing:1.0px;">96.02</span></div>
<div style="position:absolute;left:455px;top:407px;width:56px;height:18px;background:#fefdd6;"></div>
<div style="position:absolute;left:455px;top:425px;width:57px;height:1px;background:#c8c6a8;"></div>
<div style="position:absolute;left:511px;top:407px;width:1px;height:19px;background:#c8c6a8;"></div>
<div style="position:absolute;left:458px;top:407px;width:54px;height:18px;line-height:18px;display:flex;justify-content:flex-start;white-space:nowrap;color:#0c0c62;font-size:10px;-webkit-text-stroke:0.2px #0c0c62;"><span style="display:block;flex:none;transform:scaleX(0.76);transform-origin:0 50%;letter-spacing:1.0px;">-10</span></div>
<div style="position:absolute;left:512px;top:407px;width:56px;height:18px;background:#fefdd6;"></div>
<div style="position:absolute;left:512px;top:425px;width:57px;height:1px;background:#c8c6a8;"></div>
<div style="position:absolute;left:568px;top:407px;width:1px;height:19px;background:#c8c6a8;"></div>
<div style="position:absolute;left:515px;top:407px;width:54px;height:18px;line-height:18px;display:flex;justify-content:flex-start;white-space:nowrap;color:#0e560e;font-size:10px;-webkit-text-stroke:0.2px #0e560e;"><span style="display:block;flex:none;transform:scaleX(0.76);transform-origin:0 50%;letter-spacing:1.0px;">135.25</span></div>
<div style="position:absolute;left:569px;top:407px;width:56px;height:18px;background:#fefdd6;"></div>
<div style="position:absolute;left:569px;top:425px;width:57px;height:1px;background:#c8c6a8;"></div>
<div style="position:absolute;left:625px;top:407px;width:1px;height:19px;background:#c8c6a8;"></div>
<div style="position:absolute;left:572px;top:407px;width:54px;height:18px;line-height:18px;display:flex;justify-content:flex-start;white-space:nowrap;color:#0c0c62;font-size:10px;-webkit-text-stroke:0.2px #0c0c62;"><span style="display:block;flex:none;transform:scaleX(0.76);transform-origin:0 50%;letter-spacing:1.0px;">90</span></div>
<div style="position:absolute;left:626px;top:407px;width:56px;height:18px;background:#fefdd6;"></div>
<div style="position:absolute;left:626px;top:425px;width:57px;height:1px;background:#c8c6a8;"></div>
<div style="position:absolute;left:682px;top:407px;width:1px;height:19px;background:#c8c6a8;"></div>
<div style="position:absolute;left:683px;top:407px;width:56px;height:18px;background:#fefdd6;"></div>
<div style="position:absolute;left:683px;top:425px;width:57px;height:1px;background:#c8c6a8;"></div>
<div style="position:absolute;left:739px;top:407px;width:1px;height:19px;background:#c8c6a8;"></div>
<div style="position:absolute;left:740px;top:407px;width:112px;height:18px;background:#d8fad8;"></div>
<div style="position:absolute;left:740px;top:425px;width:113px;height:1px;background:#b8d0b0;"></div>
<div style="position:absolute;left:852px;top:407px;width:1px;height:19px;background:#b8d0b0;"></div>
<div style="position:absolute;left:11px;top:426px;width:11px;height:18px;background:#d4d0b4;border-left:1px solid #f4f2e8;border-top:1px solid #f4f2e8;"></div>
<div style="position:absolute;left:11px;top:444px;width:11px;height:1px;background:#000;"></div>
<div style="position:absolute;left:22px;top:426px;width:1px;height:19px;background:#000;"></div>
<div style="position:absolute;left:23px;top:426px;width:60px;height:18px;background:#fff;"></div>
<div style="position:absolute;left:23px;top:444px;width:61px;height:1px;background:#c4c4c4;"></div>
<div style="position:absolute;left:83px;top:426px;width:1px;height:19px;background:#c4c4c4;"></div>
<div style="position:absolute;left:26px;top:426px;width:58px;height:18px;line-height:18px;display:flex;justify-content:flex-start;white-space:nowrap;color:#000;font-size:10px;-webkit-text-stroke:0.2px #000;"><span style="display:block;flex:none;transform:scaleX(0.76);transform-origin:0 50%;letter-spacing:1.0px;">ПТСВ-Р1</span></div>
<div style="position:absolute;left:84px;top:426px;width:56px;height:18px;background:#fff;"></div>
<div style="position:absolute;left:84px;top:444px;width:57px;height:1px;background:#c4c4c4;"></div>
<div style="position:absolute;left:140px;top:426px;width:1px;height:19px;background:#c4c4c4;"></div>
<div style="position:absolute;left:84px;top:426px;width:52px;height:18px;line-height:18px;display:flex;justify-content:flex-end;white-space:nowrap;color:#000;font-size:10px;-webkit-text-stroke:0.2px #000;"><span style="display:block;flex:none;transform:scaleX(0.76);transform-origin:100% 50%;letter-spacing:1.0px;margin-right:-1.0px;">103</span></div>
<div style="position:absolute;left:141px;top:426px;width:43px;height:18px;background:#fff;"></div>
<div style="position:absolute;left:141px;top:444px;width:44px;height:1px;background:#c4c4c4;"></div>
<div style="position:absolute;left:184px;top:426px;width:1px;height:19px;background:#c4c4c4;"></div>
<div style="position:absolute;left:141px;top:426px;width:43px;height:18px;line-height:18px;display:flex;justify-content:center;white-space:nowrap;color:#000;font-size:10px;-webkit-text-stroke:0.2px #000;"><span style="display:block;flex:none;transform:scaleX(0.76);transform-origin:50% 50%;letter-spacing:1.0px;margin-right:-1.0px;">100П</span></div>
<div style="position:absolute;left:185px;top:426px;width:129px;height:18px;background:#fff;"></div>
<div style="position:absolute;left:185px;top:444px;width:130px;height:1px;background:#c4c4c4;"></div>
<div style="position:absolute;left:314px;top:426px;width:1px;height:19px;background:#c4c4c4;"></div>
<div style="position:absolute;left:188px;top:426px;width:127px;height:18px;line-height:18px;display:flex;justify-content:flex-start;white-space:nowrap;color:#000;font-size:10px;-webkit-text-stroke:0.2px #000;"><span style="display:block;flex:none;transform:scaleX(0.76);transform-origin:0 50%;letter-spacing:1.0px;">ООО "ИзТех"</span></div>
<div style="position:absolute;left:315px;top:426px;width:47px;height:18px;background:#fff;"></div>
<div style="position:absolute;left:315px;top:444px;width:48px;height:1px;background:#c4c4c4;"></div>
<div style="position:absolute;left:362px;top:426px;width:1px;height:19px;background:#c4c4c4;"></div>
<div style="position:absolute;left:315px;top:426px;width:47px;height:18px;line-height:18px;display:flex;justify-content:center;white-space:nowrap;color:#000;font-size:10px;-webkit-text-stroke:0.2px #000;"><span style="display:block;flex:none;transform:scaleX(0.76);transform-origin:50% 50%;letter-spacing:1.0px;margin-right:-1.0px;">4-пр.</span></div>
<div style="position:absolute;left:363px;top:426px;width:34px;height:18px;background:#fff;"></div>
<div style="position:absolute;left:363px;top:444px;width:35px;height:1px;background:#c4c4c4;"></div>
<div style="position:absolute;left:397px;top:426px;width:1px;height:19px;background:#c4c4c4;"></div>
<div style="position:absolute;left:363px;top:426px;width:34px;height:18px;line-height:18px;display:flex;justify-content:center;white-space:nowrap;color:#000;font-size:10px;-webkit-text-stroke:0.2px #000;"><span style="display:block;flex:none;transform:scaleX(0.76);transform-origin:50% 50%;letter-spacing:1.0px;margin-right:-1.0px;">0</span></div>
<div style="position:absolute;left:398px;top:426px;width:56px;height:18px;background:#fefdd6;"></div>
<div style="position:absolute;left:398px;top:444px;width:57px;height:1px;background:#c8c6a8;"></div>
<div style="position:absolute;left:454px;top:426px;width:1px;height:19px;background:#c8c6a8;"></div>
<div style="position:absolute;left:401px;top:426px;width:54px;height:18px;line-height:18px;display:flex;justify-content:flex-start;white-space:nowrap;color:#0e560e;font-size:10px;-webkit-text-stroke:0.2px #0e560e;"><span style="display:block;flex:none;transform:scaleX(0.76);transform-origin:0 50%;letter-spacing:1.0px;">100.40</span></div>
<div style="position:absolute;left:455px;top:426px;width:56px;height:18px;background:#fefdd6;"></div>
<div style="position:absolute;left:455px;top:444px;width:57px;height:1px;background:#c8c6a8;"></div>
<div style="position:absolute;left:511px;top:426px;width:1px;height:19px;background:#c8c6a8;"></div>
<div style="position:absolute;left:458px;top:426px;width:54px;height:18px;line-height:18px;display:flex;justify-content:flex-start;white-space:nowrap;color:#0c0c62;font-size:10px;-webkit-text-stroke:0.2px #0c0c62;"><span style="display:block;flex:none;transform:scaleX(0.76);transform-origin:0 50%;letter-spacing:1.0px;">1</span></div>
<div style="position:absolute;left:512px;top:426px;width:56px;height:18px;background:#fefdd6;"></div>
<div style="position:absolute;left:512px;top:444px;width:57px;height:1px;background:#c8c6a8;"></div>
<div style="position:absolute;left:568px;top:426px;width:1px;height:19px;background:#c8c6a8;"></div>
<div style="position:absolute;left:515px;top:426px;width:54px;height:18px;line-height:18px;display:flex;justify-content:flex-start;white-space:nowrap;color:#0e560e;font-size:10px;-webkit-text-stroke:0.2px #0e560e;"><span style="display:block;flex:none;transform:scaleX(0.76);transform-origin:0 50%;letter-spacing:1.0px;">127.50</span></div>
<div style="position:absolute;left:569px;top:426px;width:56px;height:18px;background:#fefdd6;"></div>
<div style="position:absolute;left:569px;top:444px;width:57px;height:1px;background:#c8c6a8;"></div>
<div style="position:absolute;left:625px;top:426px;width:1px;height:19px;background:#c8c6a8;"></div>
<div style="position:absolute;left:572px;top:426px;width:54px;height:18px;line-height:18px;display:flex;justify-content:flex-start;white-space:nowrap;color:#0c0c62;font-size:10px;-webkit-text-stroke:0.2px #0c0c62;"><span style="display:block;flex:none;transform:scaleX(0.76);transform-origin:0 50%;letter-spacing:1.0px;">70</span></div>
<div style="position:absolute;left:626px;top:426px;width:56px;height:18px;background:#fefdd6;"></div>
<div style="position:absolute;left:626px;top:444px;width:57px;height:1px;background:#c8c6a8;"></div>
<div style="position:absolute;left:682px;top:426px;width:1px;height:19px;background:#c8c6a8;"></div>
<div style="position:absolute;left:629px;top:426px;width:54px;height:18px;line-height:18px;display:flex;justify-content:flex-start;white-space:nowrap;color:#0e560e;font-size:10px;-webkit-text-stroke:0.2px #0e560e;"><span style="display:block;flex:none;transform:scaleX(0.76);transform-origin:0 50%;letter-spacing:1.0px;">150.61</span></div>
<div style="position:absolute;left:683px;top:426px;width:56px;height:18px;background:#fefdd6;"></div>
<div style="position:absolute;left:683px;top:444px;width:57px;height:1px;background:#c8c6a8;"></div>
<div style="position:absolute;left:739px;top:426px;width:1px;height:19px;background:#c8c6a8;"></div>
<div style="position:absolute;left:686px;top:426px;width:54px;height:18px;line-height:18px;display:flex;justify-content:flex-start;white-space:nowrap;color:#0c0c62;font-size:10px;-webkit-text-stroke:0.2px #0c0c62;"><span style="display:block;flex:none;transform:scaleX(0.76);transform-origin:0 50%;letter-spacing:1.0px;">130</span></div>
<div style="position:absolute;left:740px;top:426px;width:112px;height:18px;background:#d8fad8;"></div>
<div style="position:absolute;left:740px;top:444px;width:113px;height:1px;background:#b8d0b0;"></div>
<div style="position:absolute;left:852px;top:426px;width:1px;height:19px;background:#b8d0b0;"></div>
<div style="position:absolute;left:11px;top:445px;width:11px;height:18px;background:#d4d0b4;border-left:1px solid #f4f2e8;border-top:1px solid #f4f2e8;"></div>
<div style="position:absolute;left:11px;top:463px;width:11px;height:1px;background:#000;"></div>
<div style="position:absolute;left:22px;top:445px;width:1px;height:19px;background:#000;"></div>
<div style="position:absolute;left:23px;top:445px;width:60px;height:18px;background:#fff;"></div>
<div style="position:absolute;left:23px;top:463px;width:61px;height:1px;background:#c4c4c4;"></div>
<div style="position:absolute;left:83px;top:445px;width:1px;height:19px;background:#c4c4c4;"></div>
<div style="position:absolute;left:26px;top:445px;width:58px;height:18px;line-height:18px;display:flex;justify-content:flex-start;white-space:nowrap;color:#000;font-size:10px;-webkit-text-stroke:0.2px #000;"><span style="display:block;flex:none;transform:scaleX(0.76);transform-origin:0 50%;letter-spacing:1.0px;">ТС1388</span></div>
<div style="position:absolute;left:84px;top:445px;width:56px;height:18px;background:#fff;"></div>
<div style="position:absolute;left:84px;top:463px;width:57px;height:1px;background:#c4c4c4;"></div>
<div style="position:absolute;left:140px;top:445px;width:1px;height:19px;background:#c4c4c4;"></div>
<div style="position:absolute;left:84px;top:445px;width:52px;height:18px;line-height:18px;display:flex;justify-content:flex-end;white-space:nowrap;color:#000;font-size:10px;-webkit-text-stroke:0.2px #000;"><span style="display:block;flex:none;transform:scaleX(0.76);transform-origin:100% 50%;letter-spacing:1.0px;margin-right:-1.0px;">5682</span></div>
<div style="position:absolute;left:141px;top:445px;width:43px;height:18px;background:#fff;"></div>
<div style="position:absolute;left:141px;top:463px;width:44px;height:1px;background:#c4c4c4;"></div>
<div style="position:absolute;left:184px;top:445px;width:1px;height:19px;background:#c4c4c4;"></div>
<div style="position:absolute;left:141px;top:445px;width:43px;height:18px;line-height:18px;display:flex;justify-content:center;white-space:nowrap;color:#000;font-size:10px;-webkit-text-stroke:0.2px #000;"><span style="display:block;flex:none;transform:scaleX(0.76);transform-origin:50% 50%;letter-spacing:1.0px;margin-right:-1.0px;">Pt100</span></div>
<div style="position:absolute;left:185px;top:445px;width:129px;height:18px;background:#fff;"></div>
<div style="position:absolute;left:185px;top:463px;width:130px;height:1px;background:#c4c4c4;"></div>
<div style="position:absolute;left:314px;top:445px;width:1px;height:19px;background:#c4c4c4;"></div>
<div style="position:absolute;left:188px;top:445px;width:127px;height:18px;line-height:18px;display:flex;justify-content:flex-start;white-space:nowrap;color:#000;font-size:10px;-webkit-text-stroke:0.2px #000;"><span style="display:block;flex:none;transform:scaleX(0.76);transform-origin:0 50%;letter-spacing:1.0px;">ООО "ИзТех"</span></div>
<div style="position:absolute;left:315px;top:445px;width:47px;height:18px;background:#fff;"></div>
<div style="position:absolute;left:315px;top:463px;width:48px;height:1px;background:#c4c4c4;"></div>
<div style="position:absolute;left:362px;top:445px;width:1px;height:19px;background:#c4c4c4;"></div>
<div style="position:absolute;left:315px;top:445px;width:47px;height:18px;line-height:18px;display:flex;justify-content:center;white-space:nowrap;color:#000;font-size:10px;-webkit-text-stroke:0.2px #000;"><span style="display:block;flex:none;transform:scaleX(0.76);transform-origin:50% 50%;letter-spacing:1.0px;margin-right:-1.0px;">4-пр.</span></div>
<div style="position:absolute;left:363px;top:445px;width:34px;height:18px;background:#fff;"></div>
<div style="position:absolute;left:363px;top:463px;width:35px;height:1px;background:#c4c4c4;"></div>
<div style="position:absolute;left:397px;top:445px;width:1px;height:19px;background:#c4c4c4;"></div>
<div style="position:absolute;left:398px;top:445px;width:56px;height:18px;background:#fefdd6;"></div>
<div style="position:absolute;left:398px;top:463px;width:57px;height:1px;background:#c8c6a8;"></div>
<div style="position:absolute;left:454px;top:445px;width:1px;height:19px;background:#c8c6a8;"></div>
<div style="position:absolute;left:401px;top:445px;width:54px;height:18px;line-height:18px;display:flex;justify-content:flex-start;white-space:nowrap;color:#0e560e;font-size:10px;-webkit-text-stroke:0.2px #0e560e;"><span style="display:block;flex:none;transform:scaleX(0.76);transform-origin:0 50%;letter-spacing:1.0px;">100.150</span></div>
<div style="position:absolute;left:455px;top:445px;width:56px;height:18px;background:#fefdd6;"></div>
<div style="position:absolute;left:455px;top:463px;width:57px;height:1px;background:#c8c6a8;"></div>
<div style="position:absolute;left:511px;top:445px;width:1px;height:19px;background:#c8c6a8;"></div>
<div style="position:absolute;left:458px;top:445px;width:54px;height:18px;line-height:18px;display:flex;justify-content:flex-start;white-space:nowrap;color:#0c0c62;font-size:10px;-webkit-text-stroke:0.2px #0c0c62;"><span style="display:block;flex:none;transform:scaleX(0.76);transform-origin:0 50%;letter-spacing:1.0px;">-0.026</span></div>
<div style="position:absolute;left:512px;top:445px;width:56px;height:18px;background:#fefdd6;"></div>
<div style="position:absolute;left:512px;top:463px;width:57px;height:1px;background:#c8c6a8;"></div>
<div style="position:absolute;left:568px;top:445px;width:1px;height:19px;background:#c8c6a8;"></div>
<div style="position:absolute;left:515px;top:445px;width:54px;height:18px;line-height:18px;display:flex;justify-content:flex-start;white-space:nowrap;color:#0e560e;font-size:10px;-webkit-text-stroke:0.2px #0e560e;"><span style="display:block;flex:none;transform:scaleX(0.76);transform-origin:0 50%;letter-spacing:1.0px;">138.429</span></div>
<div style="position:absolute;left:569px;top:445px;width:56px;height:18px;background:#fefdd6;"></div>
<div style="position:absolute;left:569px;top:463px;width:57px;height:1px;background:#c8c6a8;"></div>
<div style="position:absolute;left:625px;top:445px;width:1px;height:19px;background:#c8c6a8;"></div>
<div style="position:absolute;left:572px;top:445px;width:54px;height:18px;line-height:18px;display:flex;justify-content:flex-start;white-space:nowrap;color:#0c0c62;font-size:10px;-webkit-text-stroke:0.2px #0c0c62;"><span style="display:block;flex:none;transform:scaleX(0.76);transform-origin:0 50%;letter-spacing:1.0px;">99.885</span></div>
<div style="position:absolute;left:626px;top:445px;width:56px;height:18px;background:#fefdd6;"></div>
<div style="position:absolute;left:626px;top:463px;width:57px;height:1px;background:#c8c6a8;"></div>
<div style="position:absolute;left:682px;top:445px;width:1px;height:19px;background:#c8c6a8;"></div>
<div style="position:absolute;left:683px;top:445px;width:56px;height:18px;background:#fefdd6;"></div>
<div style="position:absolute;left:683px;top:463px;width:57px;height:1px;background:#c8c6a8;"></div>
<div style="position:absolute;left:739px;top:445px;width:1px;height:19px;background:#c8c6a8;"></div>
<div style="position:absolute;left:740px;top:445px;width:112px;height:18px;background:#d8fad8;"></div>
<div style="position:absolute;left:740px;top:463px;width:113px;height:1px;background:#b8d0b0;"></div>
<div style="position:absolute;left:852px;top:445px;width:1px;height:19px;background:#b8d0b0;"></div>
<div style="position:absolute;left:742px;top:445px;width:110px;height:18px;line-height:18px;display:flex;justify-content:flex-start;white-space:nowrap;color:#3a1232;font-size:10px;-webkit-text-stroke:0.2px #3a1232;"><span style="display:block;flex:none;transform:scaleX(0.78);transform-origin:0 50%;letter-spacing:1.0px;">19.03.2007 15:50:50</span></div>
<div style="position:absolute;left:11px;top:464px;width:11px;height:18px;background:#d4d0b4;border-left:1px solid #f4f2e8;border-top:1px solid #f4f2e8;"></div>
<div style="position:absolute;left:11px;top:482px;width:11px;height:1px;background:#000;"></div>
<div style="position:absolute;left:22px;top:464px;width:1px;height:19px;background:#000;"></div>
<div style="position:absolute;left:23px;top:464px;width:60px;height:18px;background:#fff;"></div>
<div style="position:absolute;left:23px;top:482px;width:61px;height:1px;background:#c4c4c4;"></div>
<div style="position:absolute;left:83px;top:464px;width:1px;height:19px;background:#c4c4c4;"></div>
<div style="position:absolute;left:26px;top:464px;width:58px;height:18px;line-height:18px;display:flex;justify-content:flex-start;white-space:nowrap;color:#000;font-size:10px;-webkit-text-stroke:0.2px #000;"><span style="display:block;flex:none;transform:scaleX(0.76);transform-origin:0 50%;letter-spacing:1.0px;">ТС1388</span></div>
<div style="position:absolute;left:84px;top:464px;width:56px;height:18px;background:#fff;"></div>
<div style="position:absolute;left:84px;top:482px;width:57px;height:1px;background:#c4c4c4;"></div>
<div style="position:absolute;left:140px;top:464px;width:1px;height:19px;background:#c4c4c4;"></div>
<div style="position:absolute;left:84px;top:464px;width:52px;height:18px;line-height:18px;display:flex;justify-content:flex-end;white-space:nowrap;color:#000;font-size:10px;-webkit-text-stroke:0.2px #000;"><span style="display:block;flex:none;transform:scaleX(0.76);transform-origin:100% 50%;letter-spacing:1.0px;margin-right:-1.0px;">5683</span></div>
<div style="position:absolute;left:141px;top:464px;width:43px;height:18px;background:#fff;"></div>
<div style="position:absolute;left:141px;top:482px;width:44px;height:1px;background:#c4c4c4;"></div>
<div style="position:absolute;left:184px;top:464px;width:1px;height:19px;background:#c4c4c4;"></div>
<div style="position:absolute;left:141px;top:464px;width:43px;height:18px;line-height:18px;display:flex;justify-content:center;white-space:nowrap;color:#000;font-size:10px;-webkit-text-stroke:0.2px #000;"><span style="display:block;flex:none;transform:scaleX(0.76);transform-origin:50% 50%;letter-spacing:1.0px;margin-right:-1.0px;">Pt100</span></div>
<div style="position:absolute;left:185px;top:464px;width:129px;height:18px;background:#fff;"></div>
<div style="position:absolute;left:185px;top:482px;width:130px;height:1px;background:#c4c4c4;"></div>
<div style="position:absolute;left:314px;top:464px;width:1px;height:19px;background:#c4c4c4;"></div>
<div style="position:absolute;left:188px;top:464px;width:127px;height:18px;line-height:18px;display:flex;justify-content:flex-start;white-space:nowrap;color:#000;font-size:10px;-webkit-text-stroke:0.2px #000;"><span style="display:block;flex:none;transform:scaleX(0.76);transform-origin:0 50%;letter-spacing:1.0px;">ООО "ИзТех"</span></div>
<div style="position:absolute;left:315px;top:464px;width:47px;height:18px;background:#fff;"></div>
<div style="position:absolute;left:315px;top:482px;width:48px;height:1px;background:#c4c4c4;"></div>
<div style="position:absolute;left:362px;top:464px;width:1px;height:19px;background:#c4c4c4;"></div>
<div style="position:absolute;left:315px;top:464px;width:47px;height:18px;line-height:18px;display:flex;justify-content:center;white-space:nowrap;color:#000;font-size:10px;-webkit-text-stroke:0.2px #000;"><span style="display:block;flex:none;transform:scaleX(0.76);transform-origin:50% 50%;letter-spacing:1.0px;margin-right:-1.0px;">4-пр.</span></div>
<div style="position:absolute;left:363px;top:464px;width:34px;height:18px;background:#fff;"></div>
<div style="position:absolute;left:363px;top:482px;width:35px;height:1px;background:#c4c4c4;"></div>
<div style="position:absolute;left:397px;top:464px;width:1px;height:19px;background:#c4c4c4;"></div>
<div style="position:absolute;left:398px;top:464px;width:56px;height:18px;background:#fefdd6;"></div>
<div style="position:absolute;left:398px;top:482px;width:57px;height:1px;background:#c8c6a8;"></div>
<div style="position:absolute;left:454px;top:464px;width:1px;height:19px;background:#c8c6a8;"></div>
<div style="position:absolute;left:401px;top:464px;width:54px;height:18px;line-height:18px;display:flex;justify-content:flex-start;white-space:nowrap;color:#0e560e;font-size:10px;-webkit-text-stroke:0.2px #0e560e;"><span style="display:block;flex:none;transform:scaleX(0.76);transform-origin:0 50%;letter-spacing:1.0px;">100.175</span></div>
<div style="position:absolute;left:455px;top:464px;width:56px;height:18px;background:#fefdd6;"></div>
<div style="position:absolute;left:455px;top:482px;width:57px;height:1px;background:#c8c6a8;"></div>
<div style="position:absolute;left:511px;top:464px;width:1px;height:19px;background:#c8c6a8;"></div>
<div style="position:absolute;left:458px;top:464px;width:54px;height:18px;line-height:18px;display:flex;justify-content:flex-start;white-space:nowrap;color:#0c0c62;font-size:10px;-webkit-text-stroke:0.2px #0c0c62;"><span style="display:block;flex:none;transform:scaleX(0.76);transform-origin:0 50%;letter-spacing:1.0px;">-0.026</span></div>
<div style="position:absolute;left:512px;top:464px;width:56px;height:18px;background:#fefdd6;"></div>
<div style="position:absolute;left:512px;top:482px;width:57px;height:1px;background:#c8c6a8;"></div>
<div style="position:absolute;left:568px;top:464px;width:1px;height:19px;background:#c8c6a8;"></div>
<div style="position:absolute;left:515px;top:464px;width:54px;height:18px;line-height:18px;display:flex;justify-content:flex-start;white-space:nowrap;color:#0e560e;font-size:10px;-webkit-text-stroke:0.2px #0e560e;"><span style="display:block;flex:none;transform:scaleX(0.76);transform-origin:0 50%;letter-spacing:1.0px;">138.484</span></div>
<div style="position:absolute;left:569px;top:464px;width:56px;height:18px;background:#fefdd6;"></div>
<div style="position:absolute;left:569px;top:482px;width:57px;height:1px;background:#c8c6a8;"></div>
<div style="position:absolute;left:625px;top:464px;width:1px;height:19px;background:#c8c6a8;"></div>
<div style="position:absolute;left:572px;top:464px;width:54px;height:18px;line-height:18px;display:flex;justify-content:flex-start;white-space:nowrap;color:#0c0c62;font-size:10px;-webkit-text-stroke:0.2px #0c0c62;"><span style="display:block;flex:none;transform:scaleX(0.76);transform-origin:0 50%;letter-spacing:1.0px;">99.885</span></div>
<div style="position:absolute;left:626px;top:464px;width:56px;height:18px;background:#fefdd6;"></div>
<div style="position:absolute;left:626px;top:482px;width:57px;height:1px;background:#c8c6a8;"></div>
<div style="position:absolute;left:682px;top:464px;width:1px;height:19px;background:#c8c6a8;"></div>
<div style="position:absolute;left:683px;top:464px;width:56px;height:18px;background:#fefdd6;"></div>
<div style="position:absolute;left:683px;top:482px;width:57px;height:1px;background:#c8c6a8;"></div>
<div style="position:absolute;left:739px;top:464px;width:1px;height:19px;background:#c8c6a8;"></div>
<div style="position:absolute;left:740px;top:464px;width:112px;height:18px;background:#d8fad8;"></div>
<div style="position:absolute;left:740px;top:482px;width:113px;height:1px;background:#b8d0b0;"></div>
<div style="position:absolute;left:852px;top:464px;width:1px;height:19px;background:#b8d0b0;"></div>
<div style="position:absolute;left:742px;top:464px;width:110px;height:18px;line-height:18px;display:flex;justify-content:flex-start;white-space:nowrap;color:#3a1232;font-size:10px;-webkit-text-stroke:0.2px #3a1232;"><span style="display:block;flex:none;transform:scaleX(0.78);transform-origin:0 50%;letter-spacing:1.0px;">19.03.2007 15:50:50</span></div>
<div style="position:absolute;left:11px;top:483px;width:11px;height:18px;background:#d4d0b4;border-left:1px solid #f4f2e8;border-top:1px solid #f4f2e8;"></div>
<div style="position:absolute;left:11px;top:501px;width:11px;height:1px;background:#000;"></div>
<div style="position:absolute;left:22px;top:483px;width:1px;height:19px;background:#000;"></div>
<div style="position:absolute;left:23px;top:483px;width:60px;height:18px;background:#fff;"></div>
<div style="position:absolute;left:23px;top:501px;width:61px;height:1px;background:#c4c4c4;"></div>
<div style="position:absolute;left:83px;top:483px;width:1px;height:19px;background:#c4c4c4;"></div>
<div style="position:absolute;left:26px;top:483px;width:58px;height:18px;line-height:18px;display:flex;justify-content:flex-start;white-space:nowrap;color:#000;font-size:10px;-webkit-text-stroke:0.2px #000;"><span style="display:block;flex:none;transform:scaleX(0.76);transform-origin:0 50%;letter-spacing:1.0px;">ТС1388</span></div>
<div style="position:absolute;left:84px;top:483px;width:56px;height:18px;background:#fff;"></div>
<div style="position:absolute;left:84px;top:501px;width:57px;height:1px;background:#c4c4c4;"></div>
<div style="position:absolute;left:140px;top:483px;width:1px;height:19px;background:#c4c4c4;"></div>
<div style="position:absolute;left:84px;top:483px;width:52px;height:18px;line-height:18px;display:flex;justify-content:flex-end;white-space:nowrap;color:#000;font-size:10px;-webkit-text-stroke:0.2px #000;"><span style="display:block;flex:none;transform:scaleX(0.76);transform-origin:100% 50%;letter-spacing:1.0px;margin-right:-1.0px;">5684</span></div>
<div style="position:absolute;left:141px;top:483px;width:43px;height:18px;background:#fff;"></div>
<div style="position:absolute;left:141px;top:501px;width:44px;height:1px;background:#c4c4c4;"></div>
<div style="position:absolute;left:184px;top:483px;width:1px;height:19px;background:#c4c4c4;"></div>
<div style="position:absolute;left:141px;top:483px;width:43px;height:18px;line-height:18px;display:flex;justify-content:center;white-space:nowrap;color:#000;font-size:10px;-webkit-text-stroke:0.2px #000;"><span style="display:block;flex:none;transform:scaleX(0.76);transform-origin:50% 50%;letter-spacing:1.0px;margin-right:-1.0px;">Pt100</span></div>
<div style="position:absolute;left:185px;top:483px;width:129px;height:18px;background:#fff;"></div>
<div style="position:absolute;left:185px;top:501px;width:130px;height:1px;background:#c4c4c4;"></div>
<div style="position:absolute;left:314px;top:483px;width:1px;height:19px;background:#c4c4c4;"></div>
<div style="position:absolute;left:188px;top:483px;width:127px;height:18px;line-height:18px;display:flex;justify-content:flex-start;white-space:nowrap;color:#000;font-size:10px;-webkit-text-stroke:0.2px #000;"><span style="display:block;flex:none;transform:scaleX(0.76);transform-origin:0 50%;letter-spacing:1.0px;">ООО "ИзТех"</span></div>
<div style="position:absolute;left:315px;top:483px;width:47px;height:18px;background:#fff;"></div>
<div style="position:absolute;left:315px;top:501px;width:48px;height:1px;background:#c4c4c4;"></div>
<div style="position:absolute;left:362px;top:483px;width:1px;height:19px;background:#c4c4c4;"></div>
<div style="position:absolute;left:315px;top:483px;width:47px;height:18px;line-height:18px;display:flex;justify-content:center;white-space:nowrap;color:#000;font-size:10px;-webkit-text-stroke:0.2px #000;"><span style="display:block;flex:none;transform:scaleX(0.76);transform-origin:50% 50%;letter-spacing:1.0px;margin-right:-1.0px;">4-пр.</span></div>
<div style="position:absolute;left:363px;top:483px;width:34px;height:18px;background:#fff;"></div>
<div style="position:absolute;left:363px;top:501px;width:35px;height:1px;background:#c4c4c4;"></div>
<div style="position:absolute;left:397px;top:483px;width:1px;height:19px;background:#c4c4c4;"></div>
<div style="position:absolute;left:398px;top:483px;width:56px;height:18px;background:#fefdd6;"></div>
<div style="position:absolute;left:398px;top:501px;width:57px;height:1px;background:#c8c6a8;"></div>
<div style="position:absolute;left:454px;top:483px;width:1px;height:19px;background:#c8c6a8;"></div>
<div style="position:absolute;left:401px;top:483px;width:54px;height:18px;line-height:18px;display:flex;justify-content:flex-start;white-space:nowrap;color:#0e560e;font-size:10px;-webkit-text-stroke:0.2px #0e560e;"><span style="display:block;flex:none;transform:scaleX(0.76);transform-origin:0 50%;letter-spacing:1.0px;">100.151</span></div>
<div style="position:absolute;left:455px;top:483px;width:56px;height:18px;background:#fefdd6;"></div>
<div style="position:absolute;left:455px;top:501px;width:57px;height:1px;background:#c8c6a8;"></div>
<div style="position:absolute;left:511px;top:483px;width:1px;height:19px;background:#c8c6a8;"></div>
<div style="position:absolute;left:458px;top:483px;width:54px;height:18px;line-height:18px;display:flex;justify-content:flex-start;white-space:nowrap;color:#0c0c62;font-size:10px;-webkit-text-stroke:0.2px #0c0c62;"><span style="display:block;flex:none;transform:scaleX(0.76);transform-origin:0 50%;letter-spacing:1.0px;">-0.024</span></div>
<div style="position:absolute;left:512px;top:483px;width:56px;height:18px;background:#fefdd6;"></div>
<div style="position:absolute;left:512px;top:501px;width:57px;height:1px;background:#c8c6a8;"></div>
<div style="position:absolute;left:568px;top:483px;width:1px;height:19px;background:#c8c6a8;"></div>
<div style="position:absolute;left:515px;top:483px;width:54px;height:18px;line-height:18px;display:flex;justify-content:flex-start;white-space:nowrap;color:#0e560e;font-size:10px;-webkit-text-stroke:0.2px #0e560e;"><span style="display:block;flex:none;transform:scaleX(0.76);transform-origin:0 50%;letter-spacing:1.0px;">130.858</span></div>
<div style="position:absolute;left:569px;top:483px;width:56px;height:18px;background:#fefdd6;"></div>
<div style="position:absolute;left:569px;top:501px;width:57px;height:1px;background:#c8c6a8;"></div>
<div style="position:absolute;left:625px;top:483px;width:1px;height:19px;background:#c8c6a8;"></div>
<div style="position:absolute;left:572px;top:483px;width:54px;height:18px;line-height:18px;display:flex;justify-content:flex-start;white-space:nowrap;color:#0c0c62;font-size:10px;-webkit-text-stroke:0.2px #0c0c62;"><span style="display:block;flex:none;transform:scaleX(0.76);transform-origin:0 50%;letter-spacing:1.0px;">79.906</span></div>
<div style="position:absolute;left:626px;top:483px;width:56px;height:18px;background:#fefdd6;"></div>
<div style="position:absolute;left:626px;top:501px;width:57px;height:1px;background:#c8c6a8;"></div>
<div style="position:absolute;left:682px;top:483px;width:1px;height:19px;background:#c8c6a8;"></div>
<div style="position:absolute;left:683px;top:483px;width:56px;height:18px;background:#fefdd6;"></div>
<div style="position:absolute;left:683px;top:501px;width:57px;height:1px;background:#c8c6a8;"></div>
<div style="position:absolute;left:739px;top:483px;width:1px;height:19px;background:#c8c6a8;"></div>
<div style="position:absolute;left:740px;top:483px;width:112px;height:18px;background:#d8fad8;"></div>
<div style="position:absolute;left:740px;top:501px;width:113px;height:1px;background:#b8d0b0;"></div>
<div style="position:absolute;left:852px;top:483px;width:1px;height:19px;background:#b8d0b0;"></div>
<div style="position:absolute;left:742px;top:483px;width:110px;height:18px;line-height:18px;display:flex;justify-content:flex-start;white-space:nowrap;color:#3a1232;font-size:10px;-webkit-text-stroke:0.2px #3a1232;"><span style="display:block;flex:none;transform:scaleX(0.78);transform-origin:0 50%;letter-spacing:1.0px;">20.03.2007 13:58:56</span></div>
<div style="position:absolute;left:11px;top:502px;width:11px;height:18px;background:#d4d0b4;border-left:1px solid #f4f2e8;border-top:1px solid #f4f2e8;"></div>
<div style="position:absolute;left:11px;top:520px;width:11px;height:1px;background:#000;"></div>
<div style="position:absolute;left:22px;top:502px;width:1px;height:19px;background:#000;"></div>
<div style="position:absolute;left:23px;top:502px;width:60px;height:18px;background:#fff;"></div>
<div style="position:absolute;left:23px;top:520px;width:61px;height:1px;background:#c4c4c4;"></div>
<div style="position:absolute;left:83px;top:502px;width:1px;height:19px;background:#c4c4c4;"></div>
<div style="position:absolute;left:26px;top:502px;width:58px;height:18px;line-height:18px;display:flex;justify-content:flex-start;white-space:nowrap;color:#000;font-size:10px;-webkit-text-stroke:0.2px #000;"><span style="display:block;flex:none;transform:scaleX(0.76);transform-origin:0 50%;letter-spacing:1.0px;">ТС1388</span></div>
<div style="position:absolute;left:84px;top:502px;width:56px;height:18px;background:#fff;"></div>
<div style="position:absolute;left:84px;top:520px;width:57px;height:1px;background:#c4c4c4;"></div>
<div style="position:absolute;left:140px;top:502px;width:1px;height:19px;background:#c4c4c4;"></div>
<div style="position:absolute;left:84px;top:502px;width:52px;height:18px;line-height:18px;display:flex;justify-content:flex-end;white-space:nowrap;color:#000;font-size:10px;-webkit-text-stroke:0.2px #000;"><span style="display:block;flex:none;transform:scaleX(0.76);transform-origin:100% 50%;letter-spacing:1.0px;margin-right:-1.0px;">5685</span></div>
<div style="position:absolute;left:141px;top:502px;width:43px;height:18px;background:#fff;"></div>
<div style="position:absolute;left:141px;top:520px;width:44px;height:1px;background:#c4c4c4;"></div>
<div style="position:absolute;left:184px;top:502px;width:1px;height:19px;background:#c4c4c4;"></div>
<div style="position:absolute;left:141px;top:502px;width:43px;height:18px;line-height:18px;display:flex;justify-content:center;white-space:nowrap;color:#000;font-size:10px;-webkit-text-stroke:0.2px #000;"><span style="display:block;flex:none;transform:scaleX(0.76);transform-origin:50% 50%;letter-spacing:1.0px;margin-right:-1.0px;">Pt100</span></div>
<div style="position:absolute;left:185px;top:502px;width:129px;height:18px;background:#fff;"></div>
<div style="position:absolute;left:185px;top:520px;width:130px;height:1px;background:#c4c4c4;"></div>
<div style="position:absolute;left:314px;top:502px;width:1px;height:19px;background:#c4c4c4;"></div>
<div style="position:absolute;left:188px;top:502px;width:127px;height:18px;line-height:18px;display:flex;justify-content:flex-start;white-space:nowrap;color:#000;font-size:10px;-webkit-text-stroke:0.2px #000;"><span style="display:block;flex:none;transform:scaleX(0.76);transform-origin:0 50%;letter-spacing:1.0px;">ООО "ИзТех"</span></div>
<div style="position:absolute;left:315px;top:502px;width:47px;height:18px;background:#fff;"></div>
<div style="position:absolute;left:315px;top:520px;width:48px;height:1px;background:#c4c4c4;"></div>
<div style="position:absolute;left:362px;top:502px;width:1px;height:19px;background:#c4c4c4;"></div>
<div style="position:absolute;left:315px;top:502px;width:47px;height:18px;line-height:18px;display:flex;justify-content:center;white-space:nowrap;color:#000;font-size:10px;-webkit-text-stroke:0.2px #000;"><span style="display:block;flex:none;transform:scaleX(0.76);transform-origin:50% 50%;letter-spacing:1.0px;margin-right:-1.0px;">4-пр.</span></div>
<div style="position:absolute;left:363px;top:502px;width:34px;height:18px;background:#fff;"></div>
<div style="position:absolute;left:363px;top:520px;width:35px;height:1px;background:#c4c4c4;"></div>
<div style="position:absolute;left:397px;top:502px;width:1px;height:19px;background:#c4c4c4;"></div>
<div style="position:absolute;left:398px;top:502px;width:56px;height:18px;background:#fefdd6;"></div>
<div style="position:absolute;left:398px;top:520px;width:57px;height:1px;background:#c8c6a8;"></div>
<div style="position:absolute;left:454px;top:502px;width:1px;height:19px;background:#c8c6a8;"></div>
<div style="position:absolute;left:401px;top:502px;width:54px;height:18px;line-height:18px;display:flex;justify-content:flex-start;white-space:nowrap;color:#0e560e;font-size:10px;-webkit-text-stroke:0.2px #0e560e;"><span style="display:block;flex:none;transform:scaleX(0.76);transform-origin:0 50%;letter-spacing:1.0px;">100.077</span></div>
<div style="position:absolute;left:455px;top:502px;width:56px;height:18px;background:#fefdd6;"></div>
<div style="position:absolute;left:455px;top:520px;width:57px;height:1px;background:#c8c6a8;"></div>
<div style="position:absolute;left:511px;top:502px;width:1px;height:19px;background:#c8c6a8;"></div>
<div style="position:absolute;left:458px;top:502px;width:54px;height:18px;line-height:18px;display:flex;justify-content:flex-start;white-space:nowrap;color:#0c0c62;font-size:10px;-webkit-text-stroke:0.2px #0c0c62;"><span style="display:block;flex:none;transform:scaleX(0.76);transform-origin:0 50%;letter-spacing:1.0px;">-0.024</span></div>
<div style="position:absolute;left:512px;top:502px;width:56px;height:18px;background:#fefdd6;"></div>
<div style="position:absolute;left:512px;top:520px;width:57px;height:1px;background:#c8c6a8;"></div>
<div style="position:absolute;left:568px;top:502px;width:1px;height:19px;background:#c8c6a8;"></div>
<div style="position:absolute;left:515px;top:502px;width:54px;height:18px;line-height:18px;display:flex;justify-content:flex-start;white-space:nowrap;color:#0e560e;font-size:10px;-webkit-text-stroke:0.2px #0e560e;"><span style="display:block;flex:none;transform:scaleX(0.76);transform-origin:0 50%;letter-spacing:1.0px;">130.909</span></div>
<div style="position:absolute;left:569px;top:502px;width:56px;height:18px;background:#fefdd6;"></div>
<div style="position:absolute;left:569px;top:520px;width:57px;height:1px;background:#c8c6a8;"></div>
<div style="position:absolute;left:625px;top:502px;width:1px;height:19px;background:#c8c6a8;"></div>
<div style="position:absolute;left:572px;top:502px;width:54px;height:18px;line-height:18px;display:flex;justify-content:flex-start;white-space:nowrap;color:#0c0c62;font-size:10px;-webkit-text-stroke:0.2px #0c0c62;"><span style="display:block;flex:none;transform:scaleX(0.76);transform-origin:0 50%;letter-spacing:1.0px;">79.906</span></div>
<div style="position:absolute;left:626px;top:502px;width:56px;height:18px;background:#fefdd6;"></div>
<div style="position:absolute;left:626px;top:520px;width:57px;height:1px;background:#c8c6a8;"></div>
<div style="position:absolute;left:682px;top:502px;width:1px;height:19px;background:#c8c6a8;"></div>
<div style="position:absolute;left:683px;top:502px;width:56px;height:18px;background:#fefdd6;"></div>
<div style="position:absolute;left:683px;top:520px;width:57px;height:1px;background:#c8c6a8;"></div>
<div style="position:absolute;left:739px;top:502px;width:1px;height:19px;background:#c8c6a8;"></div>
<div style="position:absolute;left:740px;top:502px;width:112px;height:18px;background:#d8fad8;"></div>
<div style="position:absolute;left:740px;top:520px;width:113px;height:1px;background:#b8d0b0;"></div>
<div style="position:absolute;left:852px;top:502px;width:1px;height:19px;background:#b8d0b0;"></div>
<div style="position:absolute;left:742px;top:502px;width:110px;height:18px;line-height:18px;display:flex;justify-content:flex-start;white-space:nowrap;color:#3a1232;font-size:10px;-webkit-text-stroke:0.2px #3a1232;"><span style="display:block;flex:none;transform:scaleX(0.78);transform-origin:0 50%;letter-spacing:1.0px;">20.03.2007 13:58:56</span></div>
<svg style="position:absolute;left:13px;top:314px" width="8" height="12"><path d="M1 0L7 6L1 12Z" fill="#000"/></svg>
<div style="position:absolute;left:853px;top:276px;width:16px;height:307px;background:#fcfcf8;"></div>
<div style="position:absolute;left:854px;top:277px;width:14px;height:15px;background:linear-gradient(135deg,#dce6fb,#b8cbf4);border:1px solid #c4d2f0;border-radius:2px;"></div>
<svg style="position:absolute;left:854px;top:277px" width="14" height="15"><path d="M3.5 9.5L7 6L10.5 9.5" stroke="#4d6185" stroke-width="2" fill="none"/></svg>
<div style="position:absolute;left:854px;top:306px;width:14px;height:140px;background:linear-gradient(90deg,#c8d6fb,#bccdf8 50%,#b4c6f4);border:1px solid #b0c2ee;border-radius:2px;"></div>
<svg style="position:absolute;left:857px;top:372px" width="8" height="8"><path d="M0 1.5H8M0 3.5H8M0 5.5H8" stroke="#e8eefc" stroke-width="1"/><path d="M0 2.5H8M0 4.5H8M0 6.5H8" stroke="#8ca0d0" stroke-width="1"/></svg>
<div style="position:absolute;left:854px;top:567px;width:14px;height:15px;background:linear-gradient(135deg,#dce6fb,#b8cbf4);border:1px solid #c4d2f0;border-radius:2px;"></div>
<svg style="position:absolute;left:854px;top:567px" width="14" height="15"><path d="M3.5 5.5L7 9L10.5 5.5" stroke="#4d6185" stroke-width="2" fill="none"/></svg>
</body></html>
